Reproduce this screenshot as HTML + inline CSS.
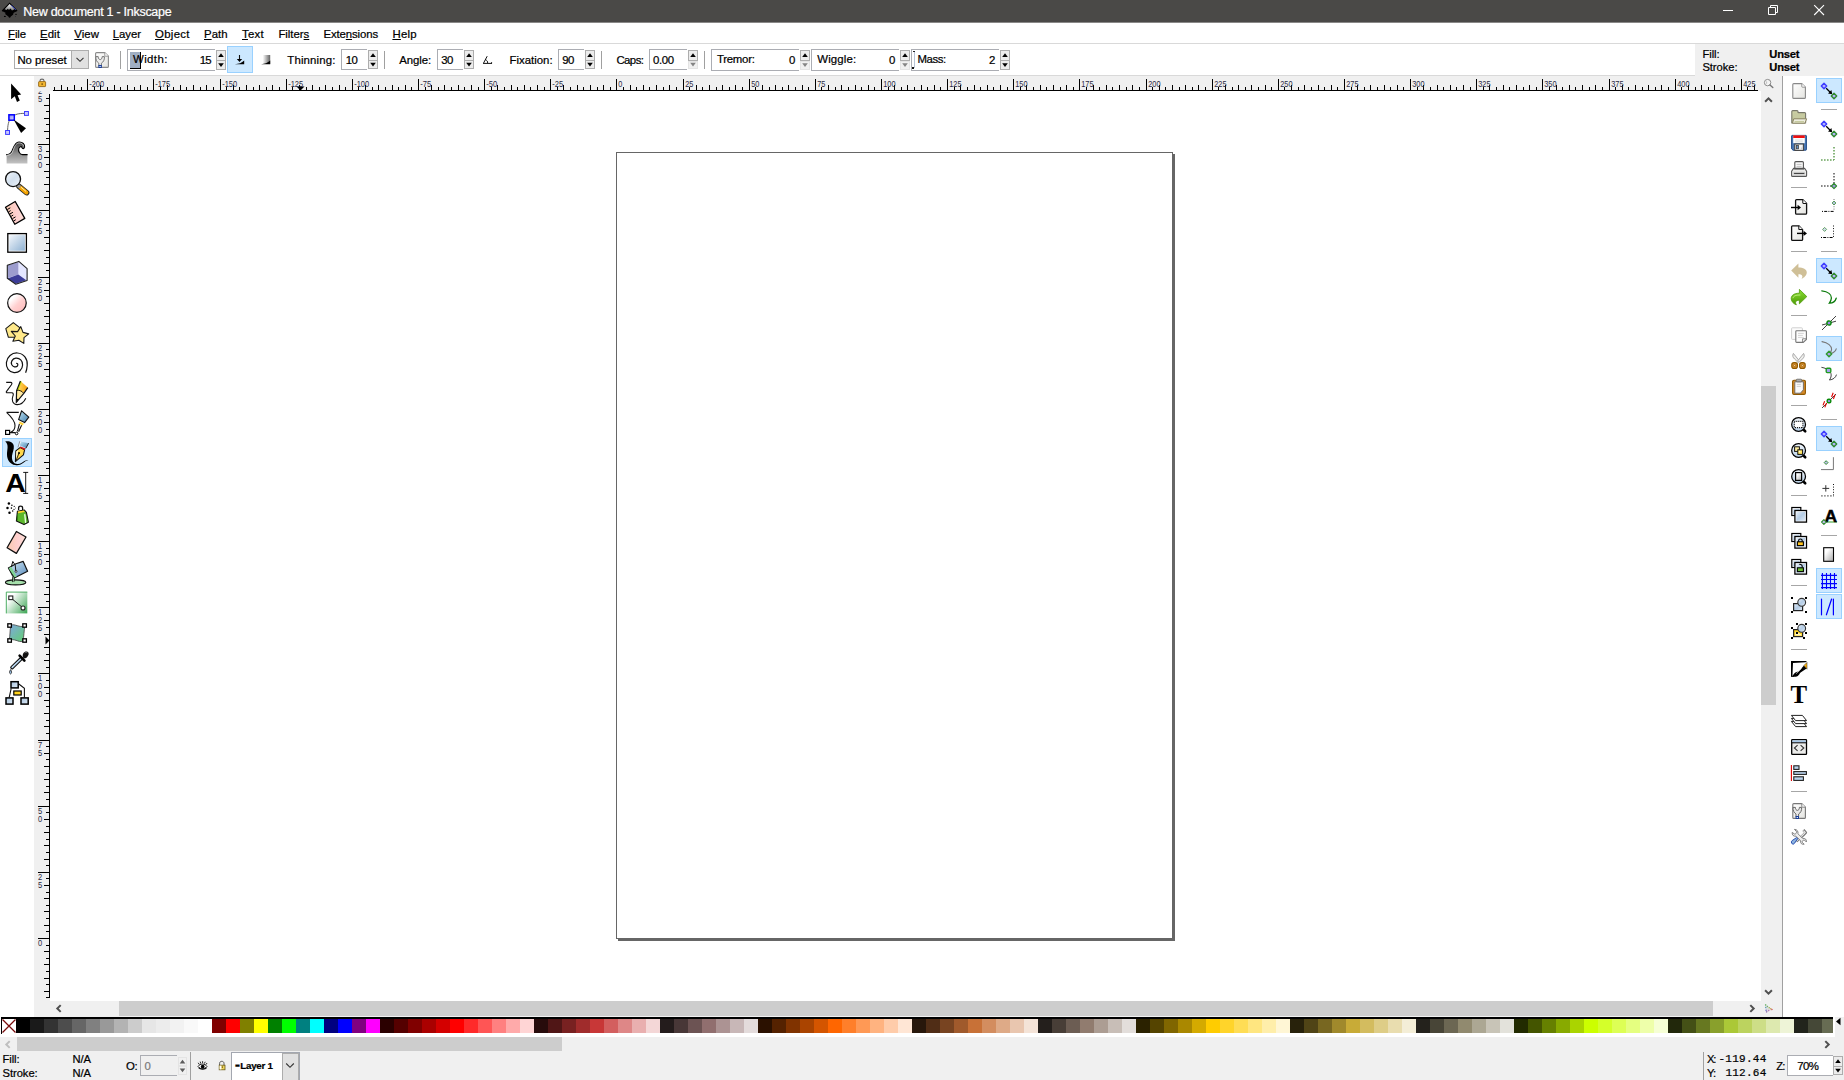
<!DOCTYPE html>
<html lang="en"><head><meta charset="utf-8"><title>New document 1 - Inkscape</title>
<style>
html,body{margin:0;padding:0;overflow:hidden;}
html{width:1844px;height:1080px;}
body{width:1844px;height:1080px;overflow:hidden;background:#fff;position:relative;font:12px "Liberation Sans",sans-serif;}
body>div,body>span,body>svg{position:absolute;box-sizing:border-box;}
body>div>div,body>div>span,body>div>svg{position:absolute;box-sizing:border-box;}
body>span{-webkit-text-stroke:0.22px currentColor;}
svg{overflow:visible;display:block;}
svg text{font-family:"Liberation Sans",sans-serif;}
</style></head>
<body>
<div style="left:0px;top:0px;width:1844px;height:22px;background:#4a4947;"></div>
<div style="left:0px;top:22px;width:1844px;height:1px;background:#8a8988;"></div>
<span id="t0" style="left:23.3px;top:4.99px;font:400 12.5px 'Liberation Sans',sans-serif;color:#fff;white-space:pre;line-height:normal;letter-spacing:-0.274px;">New document 1 - Inkscape</span>
<div style="left:0px;top:23px;width:1844px;height:20px;background:#fff;"></div>
<div style="left:0px;top:43px;width:1844px;height:1px;background:#d9d9d9;"></div>
<span id="t1" style="left:8.1px;top:27.98px;font:400 11.4px 'Liberation Sans',sans-serif;color:#000;white-space:pre;line-height:normal;letter-spacing:-0.119px;"><u>F</u>ile</span>
<span id="t2" style="left:40.1px;top:27.98px;font:400 11.4px 'Liberation Sans',sans-serif;color:#000;white-space:pre;line-height:normal;letter-spacing:0.040px;"><u>E</u>dit</span>
<span id="t3" style="left:74.3px;top:27.98px;font:400 11.4px 'Liberation Sans',sans-serif;color:#000;white-space:pre;line-height:normal;letter-spacing:0.025px;"><u>V</u>iew</span>
<span id="t4" style="left:112.8px;top:27.98px;font:400 11.4px 'Liberation Sans',sans-serif;color:#000;white-space:pre;line-height:normal;letter-spacing:-0.063px;"><u>L</u>ayer</span>
<span id="t5" style="left:155px;top:27.98px;font:400 11.4px 'Liberation Sans',sans-serif;color:#000;white-space:pre;line-height:normal;letter-spacing:0.310px;"><u>O</u>bject</span>
<span id="t6" style="left:204px;top:27.98px;font:400 11.4px 'Liberation Sans',sans-serif;color:#000;white-space:pre;line-height:normal;letter-spacing:0.037px;"><u>P</u>ath</span>
<span id="t7" style="left:242px;top:27.98px;font:400 11.4px 'Liberation Sans',sans-serif;color:#000;white-space:pre;line-height:normal;letter-spacing:0.273px;"><u>T</u>ext</span>
<span id="t8" style="left:278.4px;top:27.98px;font:400 11.4px 'Liberation Sans',sans-serif;color:#000;white-space:pre;line-height:normal;letter-spacing:-0.017px;">Filter<u>s</u></span>
<span id="t9" style="left:323.5px;top:27.98px;font:400 11.4px 'Liberation Sans',sans-serif;color:#000;white-space:pre;line-height:normal;letter-spacing:-0.123px;">Exte<u>n</u>sions</span>
<span id="t10" style="left:392.4px;top:27.98px;font:400 11.4px 'Liberation Sans',sans-serif;color:#000;white-space:pre;line-height:normal;letter-spacing:0.291px;"><u>H</u>elp</span>
<div style="left:0px;top:44px;width:1844px;height:31px;background:#fff;"></div>
<div style="left:0px;top:75px;width:1844px;height:1px;background:#d9d9d9;"></div>
<div style="left:1695px;top:44px;width:149px;height:32px;background:#f0f0f0;"></div>
<div style="left:0px;top:76px;width:34px;height:941px;background:#fff;"></div>
<div style="left:34px;top:76px;width:1727px;height:15px;background:#f0f0f0;"></div>
<div style="left:34px;top:76px;width:16px;height:925px;background:#f0f0f0;"></div>
<div style="left:50px;top:91px;width:1711px;height:910px;background:#fff;"></div>
<div style="left:1761px;top:76px;width:21px;height:941px;background:#f0f0f0;"></div>
<div style="left:34px;top:1001px;width:1748px;height:16px;background:#f0f0f0;"></div>
<div style="left:1782px;top:76px;width:1px;height:941px;background:#a0a0a0;"></div>
<div style="left:1783px;top:76px;width:61px;height:941px;background:#fff;"></div>
<div style="left:616px;top:152px;width:557px;height:787px;background:#fff;border:1px solid #666;"></div>
<div style="left:1173px;top:154px;width:2px;height:787px;background:#666;"></div>
<div style="left:618px;top:939px;width:557px;height:2px;background:#666;"></div>
<div style="left:0px;top:1017px;width:1844px;height:63px;background:#f0f0f0;"></div>
<svg style="left:0px;top:0px;pointer-events:none;" width="1844" height="1080" viewBox="0 0 1844 1080"><path d="M53 90h1705v1h-1705zM54 87h1v3h-1zM61 85h1v5h-1zM67 87h1v3h-1zM74 85h1v5h-1zM81 87h1v3h-1zM87 79h1v11h-1zM94 87h1v3h-1zM100 85h1v5h-1zM107 87h1v3h-1zM114 85h1v5h-1zM120 87h1v3h-1zM127 85h1v5h-1zM134 87h1v3h-1zM140 85h1v5h-1zM147 87h1v3h-1zM153 79h1v11h-1zM160 87h1v3h-1zM167 85h1v5h-1zM173 87h1v3h-1zM180 85h1v5h-1zM186 87h1v3h-1zM193 85h1v5h-1zM200 87h1v3h-1zM206 85h1v5h-1zM213 87h1v3h-1zM220 79h1v11h-1zM226 87h1v3h-1zM233 85h1v5h-1zM239 87h1v3h-1zM246 85h1v5h-1zM253 87h1v3h-1zM259 85h1v5h-1zM266 87h1v3h-1zM272 85h1v5h-1zM279 87h1v3h-1zM286 79h1v11h-1zM292 87h1v3h-1zM299 85h1v5h-1zM306 87h1v3h-1zM312 85h1v5h-1zM319 87h1v3h-1zM325 85h1v5h-1zM332 87h1v3h-1zM339 85h1v5h-1zM345 87h1v3h-1zM352 79h1v11h-1zM358 87h1v3h-1zM365 85h1v5h-1zM372 87h1v3h-1zM378 85h1v5h-1zM385 87h1v3h-1zM392 85h1v5h-1zM398 87h1v3h-1zM405 85h1v5h-1zM411 87h1v3h-1zM418 79h1v11h-1zM425 87h1v3h-1zM431 85h1v5h-1zM438 87h1v3h-1zM444 85h1v5h-1zM451 87h1v3h-1zM458 85h1v5h-1zM464 87h1v3h-1zM471 85h1v5h-1zM478 87h1v3h-1zM484 79h1v11h-1zM491 87h1v3h-1zM497 85h1v5h-1zM504 87h1v3h-1zM511 85h1v5h-1zM517 87h1v3h-1zM524 85h1v5h-1zM530 87h1v3h-1zM537 85h1v5h-1zM544 87h1v3h-1zM550 79h1v11h-1zM557 87h1v3h-1zM563 85h1v5h-1zM570 87h1v3h-1zM577 85h1v5h-1zM583 87h1v3h-1zM590 85h1v5h-1zM597 87h1v3h-1zM603 85h1v5h-1zM610 87h1v3h-1zM616 79h1v11h-1zM623 87h1v3h-1zM630 85h1v5h-1zM636 87h1v3h-1zM643 85h1v5h-1zM649 87h1v3h-1zM656 85h1v5h-1zM663 87h1v3h-1zM669 85h1v5h-1zM676 87h1v3h-1zM683 79h1v11h-1zM689 87h1v3h-1zM696 85h1v5h-1zM702 87h1v3h-1zM709 85h1v5h-1zM716 87h1v3h-1zM722 85h1v5h-1zM729 87h1v3h-1zM735 85h1v5h-1zM742 87h1v3h-1zM749 79h1v11h-1zM755 87h1v3h-1zM762 85h1v5h-1zM769 87h1v3h-1zM775 85h1v5h-1zM782 87h1v3h-1zM788 85h1v5h-1zM795 87h1v3h-1zM802 85h1v5h-1zM808 87h1v3h-1zM815 79h1v11h-1zM821 87h1v3h-1zM828 85h1v5h-1zM835 87h1v3h-1zM841 85h1v5h-1zM848 87h1v3h-1zM855 85h1v5h-1zM861 87h1v3h-1zM868 85h1v5h-1zM874 87h1v3h-1zM881 79h1v11h-1zM888 87h1v3h-1zM894 85h1v5h-1zM901 87h1v3h-1zM907 85h1v5h-1zM914 87h1v3h-1zM921 85h1v5h-1zM927 87h1v3h-1zM934 85h1v5h-1zM940 87h1v3h-1zM947 79h1v11h-1zM954 87h1v3h-1zM960 85h1v5h-1zM967 87h1v3h-1zM974 85h1v5h-1zM980 87h1v3h-1zM987 85h1v5h-1zM993 87h1v3h-1zM1000 85h1v5h-1zM1007 87h1v3h-1zM1013 79h1v11h-1zM1020 87h1v3h-1zM1026 85h1v5h-1zM1033 87h1v3h-1zM1040 85h1v5h-1zM1046 87h1v3h-1zM1053 85h1v5h-1zM1060 87h1v3h-1zM1066 85h1v5h-1zM1073 87h1v3h-1zM1079 79h1v11h-1zM1086 87h1v3h-1zM1093 85h1v5h-1zM1099 87h1v3h-1zM1106 85h1v5h-1zM1112 87h1v3h-1zM1119 85h1v5h-1zM1126 87h1v3h-1zM1132 85h1v5h-1zM1139 87h1v3h-1zM1146 79h1v11h-1zM1152 87h1v3h-1zM1159 85h1v5h-1zM1165 87h1v3h-1zM1172 85h1v5h-1zM1179 87h1v3h-1zM1185 85h1v5h-1zM1192 87h1v3h-1zM1198 85h1v5h-1zM1205 87h1v3h-1zM1212 79h1v11h-1zM1218 87h1v3h-1zM1225 85h1v5h-1zM1232 87h1v3h-1zM1238 85h1v5h-1zM1245 87h1v3h-1zM1251 85h1v5h-1zM1258 87h1v3h-1zM1265 85h1v5h-1zM1271 87h1v3h-1zM1278 79h1v11h-1zM1284 87h1v3h-1zM1291 85h1v5h-1zM1298 87h1v3h-1zM1304 85h1v5h-1zM1311 87h1v3h-1zM1318 85h1v5h-1zM1324 87h1v3h-1zM1331 85h1v5h-1zM1337 87h1v3h-1zM1344 79h1v11h-1zM1351 87h1v3h-1zM1357 85h1v5h-1zM1364 87h1v3h-1zM1370 85h1v5h-1zM1377 87h1v3h-1zM1384 85h1v5h-1zM1390 87h1v3h-1zM1397 85h1v5h-1zM1403 87h1v3h-1zM1410 79h1v11h-1zM1417 87h1v3h-1zM1423 85h1v5h-1zM1430 87h1v3h-1zM1437 85h1v5h-1zM1443 87h1v3h-1zM1450 85h1v5h-1zM1456 87h1v3h-1zM1463 85h1v5h-1zM1470 87h1v3h-1zM1476 79h1v11h-1zM1483 87h1v3h-1zM1489 85h1v5h-1zM1496 87h1v3h-1zM1503 85h1v5h-1zM1509 87h1v3h-1zM1516 85h1v5h-1zM1523 87h1v3h-1zM1529 85h1v5h-1zM1536 87h1v3h-1zM1542 79h1v11h-1zM1549 87h1v3h-1zM1556 85h1v5h-1zM1562 87h1v3h-1zM1569 85h1v5h-1zM1575 87h1v3h-1zM1582 85h1v5h-1zM1589 87h1v3h-1zM1595 85h1v5h-1zM1602 87h1v3h-1zM1609 79h1v11h-1zM1615 87h1v3h-1zM1622 85h1v5h-1zM1628 87h1v3h-1zM1635 85h1v5h-1zM1642 87h1v3h-1zM1648 85h1v5h-1zM1655 87h1v3h-1zM1661 85h1v5h-1zM1668 87h1v3h-1zM1675 79h1v11h-1zM1681 87h1v3h-1zM1688 85h1v5h-1zM1695 87h1v3h-1zM1701 85h1v5h-1zM1708 87h1v3h-1zM1714 85h1v5h-1zM1721 87h1v3h-1zM1728 85h1v5h-1zM1734 87h1v3h-1zM1741 79h1v11h-1zM1747 87h1v3h-1zM1754 85h1v5h-1zM49 94h1v904h-1zM46 98h3v1h-3zM44 105h5v1h-5zM46 111h3v1h-3zM44 118h5v1h-5zM46 124h3v1h-3zM44 131h5v1h-5zM46 138h3v1h-3zM38 144h11v1h-11zM46 151h3v1h-3zM44 157h5v1h-5zM46 164h3v1h-3zM44 171h5v1h-5zM46 177h3v1h-3zM44 184h5v1h-5zM46 191h3v1h-3zM44 197h5v1h-5zM46 204h3v1h-3zM38 210h11v1h-11zM46 217h3v1h-3zM44 224h5v1h-5zM46 230h3v1h-3zM44 237h5v1h-5zM46 243h3v1h-3zM44 250h5v1h-5zM46 257h3v1h-3zM44 263h5v1h-5zM46 270h3v1h-3zM38 277h11v1h-11zM46 283h3v1h-3zM44 290h5v1h-5zM46 296h3v1h-3zM44 303h5v1h-5zM46 310h3v1h-3zM44 316h5v1h-5zM46 323h3v1h-3zM44 329h5v1h-5zM46 336h3v1h-3zM38 343h11v1h-11zM46 349h3v1h-3zM44 356h5v1h-5zM46 363h3v1h-3zM44 369h5v1h-5zM46 376h3v1h-3zM44 382h5v1h-5zM46 389h3v1h-3zM44 396h5v1h-5zM46 402h3v1h-3zM38 409h11v1h-11zM46 415h3v1h-3zM44 422h5v1h-5zM46 429h3v1h-3zM44 435h5v1h-5zM46 442h3v1h-3zM44 449h5v1h-5zM46 455h3v1h-3zM44 462h5v1h-5zM46 468h3v1h-3zM38 475h11v1h-11zM46 482h3v1h-3zM44 488h5v1h-5zM46 495h3v1h-3zM44 501h5v1h-5zM46 508h3v1h-3zM44 515h5v1h-5zM46 521h3v1h-3zM44 528h5v1h-5zM46 534h3v1h-3zM38 541h11v1h-11zM46 548h3v1h-3zM44 554h5v1h-5zM46 561h3v1h-3zM44 568h5v1h-5zM46 574h3v1h-3zM44 581h5v1h-5zM46 587h3v1h-3zM44 594h5v1h-5zM46 601h3v1h-3zM38 607h11v1h-11zM46 614h3v1h-3zM44 620h5v1h-5zM46 627h3v1h-3zM44 634h5v1h-5zM46 640h3v1h-3zM44 647h5v1h-5zM46 654h3v1h-3zM44 660h5v1h-5zM46 667h3v1h-3zM38 673h11v1h-11zM46 680h3v1h-3zM44 687h5v1h-5zM46 693h3v1h-3zM44 700h5v1h-5zM46 706h3v1h-3zM44 713h5v1h-5zM46 720h3v1h-3zM44 726h5v1h-5zM46 733h3v1h-3zM38 740h11v1h-11zM46 746h3v1h-3zM44 753h5v1h-5zM46 759h3v1h-3zM44 766h5v1h-5zM46 773h3v1h-3zM44 779h5v1h-5zM46 786h3v1h-3zM44 792h5v1h-5zM46 799h3v1h-3zM38 806h11v1h-11zM46 812h3v1h-3zM44 819h5v1h-5zM46 826h3v1h-3zM44 832h5v1h-5zM46 839h3v1h-3zM44 845h5v1h-5zM46 852h3v1h-3zM44 859h5v1h-5zM46 865h3v1h-3zM38 872h11v1h-11zM46 878h3v1h-3zM44 885h5v1h-5zM46 892h3v1h-3zM44 898h5v1h-5zM46 905h3v1h-3zM44 911h5v1h-5zM46 918h3v1h-3zM44 925h5v1h-5zM46 931h3v1h-3zM38 938h11v1h-11zM46 945h3v1h-3zM44 951h5v1h-5zM46 958h3v1h-3zM44 964h5v1h-5zM46 971h3v1h-3zM44 978h5v1h-5zM46 984h3v1h-3zM44 991h5v1h-5zM46 997h3v1h-3z" fill="#000" shape-rendering="crispEdges"/><path d="M296.5 86.5h8l-4 4zM45.5 636.5v8l4 -4z" fill="#000"/><clipPath id="vclip"><rect x="34" y="91.6" width="16" height="909"/></clipPath><g font-size="8.6" fill="#2a2a44"><text x="89.2" y="87" textLength="15.0" lengthAdjust="spacingAndGlyphs">-200</text><text x="155.2" y="87" textLength="15.0" lengthAdjust="spacingAndGlyphs">-175</text><text x="222.2" y="87" textLength="15.0" lengthAdjust="spacingAndGlyphs">-150</text><text x="288.2" y="87" textLength="15.0" lengthAdjust="spacingAndGlyphs">-125</text><text x="354.2" y="87" textLength="15.0" lengthAdjust="spacingAndGlyphs">-100</text><text x="420.2" y="87" textLength="10.9" lengthAdjust="spacingAndGlyphs">-75</text><text x="486.2" y="87" textLength="10.9" lengthAdjust="spacingAndGlyphs">-50</text><text x="552.2" y="87" textLength="10.9" lengthAdjust="spacingAndGlyphs">-25</text><text x="618.2" y="87" textLength="4.1" lengthAdjust="spacingAndGlyphs">0</text><text x="685.2" y="87" textLength="8.2" lengthAdjust="spacingAndGlyphs">25</text><text x="751.2" y="87" textLength="8.2" lengthAdjust="spacingAndGlyphs">50</text><text x="817.2" y="87" textLength="8.2" lengthAdjust="spacingAndGlyphs">75</text><text x="883.2" y="87" textLength="12.3" lengthAdjust="spacingAndGlyphs">100</text><text x="949.2" y="87" textLength="12.3" lengthAdjust="spacingAndGlyphs">125</text><text x="1015.2" y="87" textLength="12.3" lengthAdjust="spacingAndGlyphs">150</text><text x="1081.2" y="87" textLength="12.3" lengthAdjust="spacingAndGlyphs">175</text><text x="1148.2" y="87" textLength="12.3" lengthAdjust="spacingAndGlyphs">200</text><text x="1214.2" y="87" textLength="12.3" lengthAdjust="spacingAndGlyphs">225</text><text x="1280.2" y="87" textLength="12.3" lengthAdjust="spacingAndGlyphs">250</text><text x="1346.2" y="87" textLength="12.3" lengthAdjust="spacingAndGlyphs">275</text><text x="1412.2" y="87" textLength="12.3" lengthAdjust="spacingAndGlyphs">300</text><text x="1478.2" y="87" textLength="12.3" lengthAdjust="spacingAndGlyphs">325</text><text x="1544.2" y="87" textLength="12.3" lengthAdjust="spacingAndGlyphs">350</text><text x="1611.2" y="87" textLength="12.3" lengthAdjust="spacingAndGlyphs">375</text><text x="1677.2" y="87" textLength="12.3" lengthAdjust="spacingAndGlyphs">400</text><text x="1743.2" y="87" textLength="12.3" lengthAdjust="spacingAndGlyphs">425</text></g><g font-size="8.6" fill="#2a2a44" clip-path="url(#vclip)"><text x="38" y="946" textLength="4.2" lengthAdjust="spacingAndGlyphs">0</text><text x="38" y="880" textLength="4.2" lengthAdjust="spacingAndGlyphs">2</text><text x="38" y="888" textLength="4.2" lengthAdjust="spacingAndGlyphs">5</text><text x="38" y="814" textLength="4.2" lengthAdjust="spacingAndGlyphs">5</text><text x="38" y="822" textLength="4.2" lengthAdjust="spacingAndGlyphs">0</text><text x="38" y="748" textLength="4.2" lengthAdjust="spacingAndGlyphs">7</text><text x="38" y="756" textLength="4.2" lengthAdjust="spacingAndGlyphs">5</text><text x="38" y="681" textLength="4.2" lengthAdjust="spacingAndGlyphs">1</text><text x="38" y="689" textLength="4.2" lengthAdjust="spacingAndGlyphs">0</text><text x="38" y="697" textLength="4.2" lengthAdjust="spacingAndGlyphs">0</text><text x="38" y="615" textLength="4.2" lengthAdjust="spacingAndGlyphs">1</text><text x="38" y="623" textLength="4.2" lengthAdjust="spacingAndGlyphs">2</text><text x="38" y="631" textLength="4.2" lengthAdjust="spacingAndGlyphs">5</text><text x="38" y="549" textLength="4.2" lengthAdjust="spacingAndGlyphs">1</text><text x="38" y="557" textLength="4.2" lengthAdjust="spacingAndGlyphs">5</text><text x="38" y="565" textLength="4.2" lengthAdjust="spacingAndGlyphs">0</text><text x="38" y="483" textLength="4.2" lengthAdjust="spacingAndGlyphs">1</text><text x="38" y="491" textLength="4.2" lengthAdjust="spacingAndGlyphs">7</text><text x="38" y="499" textLength="4.2" lengthAdjust="spacingAndGlyphs">5</text><text x="38" y="417" textLength="4.2" lengthAdjust="spacingAndGlyphs">2</text><text x="38" y="425" textLength="4.2" lengthAdjust="spacingAndGlyphs">0</text><text x="38" y="433" textLength="4.2" lengthAdjust="spacingAndGlyphs">0</text><text x="38" y="351" textLength="4.2" lengthAdjust="spacingAndGlyphs">2</text><text x="38" y="359" textLength="4.2" lengthAdjust="spacingAndGlyphs">2</text><text x="38" y="367" textLength="4.2" lengthAdjust="spacingAndGlyphs">5</text><text x="38" y="285" textLength="4.2" lengthAdjust="spacingAndGlyphs">2</text><text x="38" y="293" textLength="4.2" lengthAdjust="spacingAndGlyphs">5</text><text x="38" y="301" textLength="4.2" lengthAdjust="spacingAndGlyphs">0</text><text x="38" y="218" textLength="4.2" lengthAdjust="spacingAndGlyphs">2</text><text x="38" y="226" textLength="4.2" lengthAdjust="spacingAndGlyphs">7</text><text x="38" y="234" textLength="4.2" lengthAdjust="spacingAndGlyphs">5</text><text x="38" y="152" textLength="4.2" lengthAdjust="spacingAndGlyphs">3</text><text x="38" y="160" textLength="4.2" lengthAdjust="spacingAndGlyphs">0</text><text x="38" y="168" textLength="4.2" lengthAdjust="spacingAndGlyphs">0</text><text x="38" y="94" textLength="4.2" lengthAdjust="spacingAndGlyphs">2</text><text x="38" y="102" textLength="4.2" lengthAdjust="spacingAndGlyphs">5</text></g></svg>
<div style="left:0px;top:1017px;width:1835px;height:20px;background:#fff;"></div>
<div style="left:1px;top:1017px;width:1832px;height:2px;background:#000;"></div>
<div style="left:1px;top:1017px;width:1px;height:17px;background:#000;"></div>
<svg style="left:0px;top:0px;pointer-events:none;shape-rendering:crispEdges;" width="1844" height="1080" viewBox="0 0 1844 1080"><rect x="16" y="1019" width="14" height="14" fill="#000000"/><rect x="30" y="1019" width="14" height="14" fill="#1a1a1a"/><rect x="44" y="1019" width="14" height="14" fill="#333333"/><rect x="58" y="1019" width="14" height="14" fill="#4d4d4d"/><rect x="72" y="1019" width="14" height="14" fill="#666666"/><rect x="86" y="1019" width="14" height="14" fill="#808080"/><rect x="100" y="1019" width="14" height="14" fill="#999999"/><rect x="114" y="1019" width="14" height="14" fill="#b3b3b3"/><rect x="128" y="1019" width="14" height="14" fill="#cccccc"/><rect x="142" y="1019" width="14" height="14" fill="#e6e6e6"/><rect x="156" y="1019" width="14" height="14" fill="#ececec"/><rect x="170" y="1019" width="14" height="14" fill="#f2f2f2"/><rect x="184" y="1019" width="14" height="14" fill="#f9f9f9"/><rect x="198" y="1019" width="14" height="14" fill="#ffffff"/><rect x="212" y="1019" width="14" height="14" fill="#800000"/><rect x="226" y="1019" width="14" height="14" fill="#ff0000"/><rect x="240" y="1019" width="14" height="14" fill="#808000"/><rect x="254" y="1019" width="14" height="14" fill="#ffff00"/><rect x="268" y="1019" width="14" height="14" fill="#008000"/><rect x="282" y="1019" width="14" height="14" fill="#00ff00"/><rect x="296" y="1019" width="14" height="14" fill="#008080"/><rect x="310" y="1019" width="14" height="14" fill="#00ffff"/><rect x="324" y="1019" width="14" height="14" fill="#000080"/><rect x="338" y="1019" width="14" height="14" fill="#0000ff"/><rect x="352" y="1019" width="14" height="14" fill="#800080"/><rect x="366" y="1019" width="14" height="14" fill="#ff00ff"/><rect x="380" y="1019" width="14" height="14" fill="#2b0000"/><rect x="394" y="1019" width="14" height="14" fill="#550000"/><rect x="408" y="1019" width="14" height="14" fill="#800000"/><rect x="422" y="1019" width="14" height="14" fill="#aa0000"/><rect x="436" y="1019" width="14" height="14" fill="#d40000"/><rect x="450" y="1019" width="14" height="14" fill="#ff0000"/><rect x="464" y="1019" width="14" height="14" fill="#ff2a2a"/><rect x="478" y="1019" width="14" height="14" fill="#ff5555"/><rect x="492" y="1019" width="14" height="14" fill="#ff8080"/><rect x="506" y="1019" width="14" height="14" fill="#ffaaaa"/><rect x="520" y="1019" width="14" height="14" fill="#ffd5d5"/><rect x="534" y="1019" width="14" height="14" fill="#280b0b"/><rect x="548" y="1019" width="14" height="14" fill="#501616"/><rect x="562" y="1019" width="14" height="14" fill="#782121"/><rect x="576" y="1019" width="14" height="14" fill="#a02c2c"/><rect x="590" y="1019" width="14" height="14" fill="#c83737"/><rect x="604" y="1019" width="14" height="14" fill="#d35f5f"/><rect x="618" y="1019" width="14" height="14" fill="#de8787"/><rect x="632" y="1019" width="14" height="14" fill="#e9afaf"/><rect x="646" y="1019" width="14" height="14" fill="#f4d7d7"/><rect x="660" y="1019" width="14" height="14" fill="#241c1c"/><rect x="674" y="1019" width="14" height="14" fill="#483737"/><rect x="688" y="1019" width="14" height="14" fill="#6c5353"/><rect x="702" y="1019" width="14" height="14" fill="#916f6f"/><rect x="716" y="1019" width="14" height="14" fill="#ac9393"/><rect x="730" y="1019" width="14" height="14" fill="#c8b7b7"/><rect x="744" y="1019" width="14" height="14" fill="#e3dbdb"/><rect x="758" y="1019" width="14" height="14" fill="#2b1100"/><rect x="772" y="1019" width="14" height="14" fill="#552200"/><rect x="786" y="1019" width="14" height="14" fill="#803300"/><rect x="800" y="1019" width="14" height="14" fill="#aa4400"/><rect x="814" y="1019" width="14" height="14" fill="#d45500"/><rect x="828" y="1019" width="14" height="14" fill="#ff6600"/><rect x="842" y="1019" width="14" height="14" fill="#ff7f2a"/><rect x="856" y="1019" width="14" height="14" fill="#ff9955"/><rect x="870" y="1019" width="14" height="14" fill="#ffb380"/><rect x="884" y="1019" width="14" height="14" fill="#ffccaa"/><rect x="898" y="1019" width="14" height="14" fill="#ffe6d5"/><rect x="912" y="1019" width="14" height="14" fill="#28170b"/><rect x="926" y="1019" width="14" height="14" fill="#502d16"/><rect x="940" y="1019" width="14" height="14" fill="#784421"/><rect x="954" y="1019" width="14" height="14" fill="#a05a2c"/><rect x="968" y="1019" width="14" height="14" fill="#c87137"/><rect x="982" y="1019" width="14" height="14" fill="#d38d5f"/><rect x="996" y="1019" width="14" height="14" fill="#deaa87"/><rect x="1010" y="1019" width="14" height="14" fill="#e9c6af"/><rect x="1024" y="1019" width="14" height="14" fill="#f4e3d7"/><rect x="1038" y="1019" width="14" height="14" fill="#241f1c"/><rect x="1052" y="1019" width="14" height="14" fill="#483e37"/><rect x="1066" y="1019" width="14" height="14" fill="#6c5d53"/><rect x="1080" y="1019" width="14" height="14" fill="#917c6f"/><rect x="1094" y="1019" width="14" height="14" fill="#ac9d93"/><rect x="1108" y="1019" width="14" height="14" fill="#c8beb7"/><rect x="1122" y="1019" width="14" height="14" fill="#e3dedb"/><rect x="1136" y="1019" width="14" height="14" fill="#2b2200"/><rect x="1150" y="1019" width="14" height="14" fill="#554400"/><rect x="1164" y="1019" width="14" height="14" fill="#806600"/><rect x="1178" y="1019" width="14" height="14" fill="#aa8800"/><rect x="1192" y="1019" width="14" height="14" fill="#d4aa00"/><rect x="1206" y="1019" width="14" height="14" fill="#ffcc00"/><rect x="1220" y="1019" width="14" height="14" fill="#ffd42a"/><rect x="1234" y="1019" width="14" height="14" fill="#ffdd55"/><rect x="1248" y="1019" width="14" height="14" fill="#ffe680"/><rect x="1262" y="1019" width="14" height="14" fill="#ffeeaa"/><rect x="1276" y="1019" width="14" height="14" fill="#fff6d5"/><rect x="1290" y="1019" width="14" height="14" fill="#28220b"/><rect x="1304" y="1019" width="14" height="14" fill="#504416"/><rect x="1318" y="1019" width="14" height="14" fill="#786721"/><rect x="1332" y="1019" width="14" height="14" fill="#a0892c"/><rect x="1346" y="1019" width="14" height="14" fill="#c8ab37"/><rect x="1360" y="1019" width="14" height="14" fill="#d3bc5f"/><rect x="1374" y="1019" width="14" height="14" fill="#decd87"/><rect x="1388" y="1019" width="14" height="14" fill="#e9ddaf"/><rect x="1402" y="1019" width="14" height="14" fill="#f4eed7"/><rect x="1416" y="1019" width="14" height="14" fill="#24221c"/><rect x="1430" y="1019" width="14" height="14" fill="#484537"/><rect x="1444" y="1019" width="14" height="14" fill="#6c6753"/><rect x="1458" y="1019" width="14" height="14" fill="#918a6f"/><rect x="1472" y="1019" width="14" height="14" fill="#aca793"/><rect x="1486" y="1019" width="14" height="14" fill="#c8c4b7"/><rect x="1500" y="1019" width="14" height="14" fill="#e3e2db"/><rect x="1514" y="1019" width="14" height="14" fill="#222b00"/><rect x="1528" y="1019" width="14" height="14" fill="#445500"/><rect x="1542" y="1019" width="14" height="14" fill="#668000"/><rect x="1556" y="1019" width="14" height="14" fill="#88aa00"/><rect x="1570" y="1019" width="14" height="14" fill="#aad400"/><rect x="1584" y="1019" width="14" height="14" fill="#ccff00"/><rect x="1598" y="1019" width="14" height="14" fill="#d4ff2a"/><rect x="1612" y="1019" width="14" height="14" fill="#ddff55"/><rect x="1626" y="1019" width="14" height="14" fill="#e5ff80"/><rect x="1640" y="1019" width="14" height="14" fill="#eeffaa"/><rect x="1654" y="1019" width="14" height="14" fill="#f6ffd5"/><rect x="1668" y="1019" width="14" height="14" fill="#22280b"/><rect x="1682" y="1019" width="14" height="14" fill="#445016"/><rect x="1696" y="1019" width="14" height="14" fill="#677821"/><rect x="1710" y="1019" width="14" height="14" fill="#89a02c"/><rect x="1724" y="1019" width="14" height="14" fill="#abc837"/><rect x="1738" y="1019" width="14" height="14" fill="#bcd35f"/><rect x="1752" y="1019" width="14" height="14" fill="#cdde87"/><rect x="1766" y="1019" width="14" height="14" fill="#dde9af"/><rect x="1780" y="1019" width="14" height="14" fill="#eef4d7"/><rect x="1794" y="1019" width="14" height="14" fill="#22241c"/><rect x="1808" y="1019" width="14" height="14" fill="#454837"/><rect x="1822" y="1019" width="11" height="14" fill="#676c53"/><path d="M2.5 1019.5L15.5 1032.5M15.5 1019.5L2.5 1032.5" stroke="#7a0c0c" stroke-width="1.3" fill="none" shape-rendering="auto"/></svg>
<div style="left:119px;top:1001px;width:1594px;height:15px;background:#cdcdcd;"></div>
<div style="left:1761px;top:386px;width:15px;height:319px;background:#cdcdcd;"></div>
<div style="left:17px;top:1037px;width:545px;height:14px;background:#cdcdcd;"></div>
<svg style="left:0px;top:0px;pointer-events:none;" width="1844" height="1080" viewBox="0 0 1844 1080"><path d="M60.7 1005.1L57.3 1008.5L60.7 1011.9" stroke="#505050" stroke-width="2" fill="none"/><path d="M1750.3 1005.1L1753.7 1008.5L1750.3 1011.9" stroke="#505050" stroke-width="2" fill="none"/><path d="M1765.1 101.7L1768.5 98.3L1771.9 101.7" stroke="#505050" stroke-width="2" fill="none"/><path d="M1765.1 990.3L1768.5 993.7L1771.9 990.3" stroke="#505050" stroke-width="2" fill="none"/><path d="M9.7 1041.1L6.3 1044.5L9.7 1047.9" stroke="#bfbfbf" stroke-width="2" fill="none"/><path d="M1825.3 1041.1L1828.7 1044.5L1825.3 1047.9" stroke="#505050" stroke-width="2" fill="none"/><path d="M1836 1021.5L1840.5 1017.8V1025.2z" fill="#000"/></svg>
<div style="left:14px;top:50px;width:75px;height:19px;background:#fff;border:1px solid #adadad;"></div>
<div style="left:71px;top:50px;width:18px;height:19px;background:#e1e1e1;border:1px solid #adadad;"></div>
<svg style="left:71px;top:50px;" width="18" height="19" viewBox="0 0 18 19"><path d="M5.5 7.8L9 11.3L12.5 7.8" stroke="#333" stroke-width="1.1" fill="none"/></svg>
<span id="t11" style="left:17.4px;top:53.68px;font:400 11.4px 'Liberation Sans',sans-serif;color:#000;white-space:pre;line-height:normal;letter-spacing:-0.021px;">No preset</span>
<div style="left:120px;top:51px;width:1px;height:18px;background:#a0a0a0;"></div>
<div style="left:127px;top:49px;width:88px;height:22px;background:#fff;border:1px solid #abadb3;border-right:none;"></div>
<div style="left:130px;top:52px;width:11px;height:17px;background:#a0afc3;border-right:1px solid #000;border-bottom:1px solid #000;"></div>
<span id="t12" style="left:133px;top:52.68px;font:400 11.4px 'Liberation Sans',sans-serif;color:#000;white-space:pre;line-height:normal;letter-spacing:0.403px;">Width:</span>
<span id="t13" style="left:199.7px;top:53.68px;font:400 11.4px 'Liberation Sans',sans-serif;color:#000;white-space:pre;line-height:normal;letter-spacing:-0.836px;">15</span>
<div style="left:216px;top:50px;width:10px;height:11px;background:#ececec;border:1px solid #adadad;"></div>
<div style="left:216px;top:60px;width:10px;height:10px;background:#ececec;border:1px solid #adadad;"></div>
<svg style="left:216px;top:50px;" width="10" height="20" viewBox="0 0 10 20"><path d="M2.2 7.1L5 3.3000000000000003L7.8 7.1z" fill="#000"/><path d="M2.2 13.299999999999999L5 17.099999999999998L7.8 13.299999999999999z" fill="#000"/></svg>
<div style="left:227px;top:46px;width:26px;height:27px;background:#cce8ff;border:1px solid #99d1ff;"></div>
<span id="t14" style="left:287.3px;top:53.68px;font:400 11.4px 'Liberation Sans',sans-serif;color:#000;white-space:pre;line-height:normal;letter-spacing:0.149px;">Thinning:</span>
<div style="left:341px;top:49px;width:26px;height:21px;background:#fff;border:1px solid #abadb3;border-right:none;"></div>
<span id="t15" style="left:345.8px;top:53.68px;font:400 11.4px 'Liberation Sans',sans-serif;color:#000;white-space:pre;line-height:normal;letter-spacing:-0.586px;">10</span>
<div style="left:368px;top:50px;width:10px;height:11px;background:#ececec;border:1px solid #adadad;"></div>
<div style="left:368px;top:60px;width:10px;height:9px;background:#ececec;border:1px solid #adadad;"></div>
<svg style="left:368px;top:50px;" width="10" height="19" viewBox="0 0 10 19"><path d="M2.2 7.1L5 3.3000000000000003L7.8 7.1z" fill="#000"/><path d="M2.2 12.799999999999999L5 16.599999999999998L7.8 12.799999999999999z" fill="#000"/></svg>
<div style="left:384px;top:51px;width:1px;height:18px;background:#a0a0a0;"></div>
<span id="t16" style="left:399.3px;top:53.68px;font:400 11.4px 'Liberation Sans',sans-serif;color:#000;white-space:pre;line-height:normal;letter-spacing:-0.069px;">Angle:</span>
<div style="left:437px;top:49px;width:26px;height:21px;background:#fff;border:1px solid #abadb3;border-right:none;"></div>
<span id="t17" style="left:441.3px;top:53.68px;font:400 11.4px 'Liberation Sans',sans-serif;color:#000;white-space:pre;line-height:normal;letter-spacing:-0.736px;">30</span>
<div style="left:464px;top:50px;width:10px;height:11px;background:#ececec;border:1px solid #adadad;"></div>
<div style="left:464px;top:60px;width:10px;height:9px;background:#ececec;border:1px solid #adadad;"></div>
<svg style="left:464px;top:50px;" width="10" height="19" viewBox="0 0 10 19"><path d="M2.2 7.1L5 3.3000000000000003L7.8 7.1z" fill="#000"/><path d="M2.2 12.799999999999999L5 16.599999999999998L7.8 12.799999999999999z" fill="#000"/></svg>
<span id="t18" style="left:509.6px;top:53.68px;font:400 11.4px 'Liberation Sans',sans-serif;color:#000;white-space:pre;line-height:normal;letter-spacing:-0.007px;">Fixation:</span>
<div style="left:558px;top:49px;width:26px;height:21px;background:#fff;border:1px solid #abadb3;border-right:none;"></div>
<span id="t19" style="left:562.2px;top:53.68px;font:400 11.4px 'Liberation Sans',sans-serif;color:#000;white-space:pre;line-height:normal;letter-spacing:-0.586px;">90</span>
<div style="left:585px;top:50px;width:10px;height:11px;background:#ececec;border:1px solid #adadad;"></div>
<div style="left:585px;top:60px;width:10px;height:9px;background:#ececec;border:1px solid #adadad;"></div>
<svg style="left:585px;top:50px;" width="10" height="19" viewBox="0 0 10 19"><path d="M2.2 7.1L5 3.3000000000000003L7.8 7.1z" fill="#000"/><path d="M2.2 12.799999999999999L5 16.599999999999998L7.8 12.799999999999999z" fill="#000"/></svg>
<div style="left:601px;top:51px;width:1px;height:18px;background:#a0a0a0;"></div>
<span id="t20" style="left:616.4px;top:53.68px;font:400 11.4px 'Liberation Sans',sans-serif;color:#000;white-space:pre;line-height:normal;letter-spacing:-0.553px;">Caps:</span>
<div style="left:649px;top:49px;width:38px;height:21px;background:#fff;border:1px solid #abadb3;border-right:none;"></div>
<span id="t21" style="left:653px;top:53.68px;font:400 11.4px 'Liberation Sans',sans-serif;color:#000;white-space:pre;line-height:normal;letter-spacing:-0.343px;">0.00</span>
<div style="left:688px;top:50px;width:10px;height:11px;background:#ececec;border:1px solid #adadad;"></div>
<div style="left:688px;top:61px;width:10px;height:8px;background:#f0f0f0;border:1px solid #e4e4e4;"></div>
<svg style="left:688px;top:50px;" width="10" height="19" viewBox="0 0 10 19"><path d="M2.2 7.1L5 3.3000000000000003L7.8 7.1z" fill="#000"/><path d="M2.2 12.799999999999999L5 16.599999999999998L7.8 12.799999999999999z" fill="#848484"/></svg>
<div style="left:704px;top:51px;width:1px;height:18px;background:#a0a0a0;"></div>
<div style="left:711px;top:49px;width:88px;height:22px;background:#fff;border:1px solid #abadb3;border-right:none;"></div>
<span id="t22" style="left:717px;top:52.68px;font:400 11.4px 'Liberation Sans',sans-serif;color:#000;white-space:pre;line-height:normal;letter-spacing:-0.265px;">Tremor:</span>
<span id="t23" style="left:789px;top:53.68px;font:400 11.4px 'Liberation Sans',sans-serif;color:#000;white-space:pre;line-height:normal;letter-spacing:0.056px;">0</span>
<div style="left:800px;top:50px;width:10px;height:11px;background:#ececec;border:1px solid #adadad;"></div>
<div style="left:800px;top:61px;width:10px;height:9px;background:#f0f0f0;border:1px solid #e4e4e4;"></div>
<svg style="left:800px;top:50px;" width="10" height="20" viewBox="0 0 10 20"><path d="M2.2 7.1L5 3.3000000000000003L7.8 7.1z" fill="#000"/><path d="M2.2 13.299999999999999L5 17.099999999999998L7.8 13.299999999999999z" fill="#848484"/></svg>
<div style="left:811px;top:49px;width:88px;height:22px;background:#fff;border:1px solid #abadb3;border-right:none;"></div>
<span id="t24" style="left:817.3px;top:52.68px;font:400 11.4px 'Liberation Sans',sans-serif;color:#000;white-space:pre;line-height:normal;letter-spacing:0.131px;">Wiggle:</span>
<span id="t25" style="left:889px;top:53.68px;font:400 11.4px 'Liberation Sans',sans-serif;color:#000;white-space:pre;line-height:normal;letter-spacing:0.056px;">0</span>
<div style="left:900px;top:50px;width:10px;height:11px;background:#ececec;border:1px solid #adadad;"></div>
<div style="left:900px;top:61px;width:10px;height:9px;background:#f0f0f0;border:1px solid #e4e4e4;"></div>
<svg style="left:900px;top:50px;" width="10" height="20" viewBox="0 0 10 20"><path d="M2.2 7.1L5 3.3000000000000003L7.8 7.1z" fill="#000"/><path d="M2.2 13.299999999999999L5 17.099999999999998L7.8 13.299999999999999z" fill="#848484"/></svg>
<div style="left:911px;top:49px;width:88px;height:22px;background:#fff;border:1px solid #abadb3;border-right:none;"></div>
<span id="t26" style="left:917.5px;top:52.68px;font:400 11.4px 'Liberation Sans',sans-serif;color:#000;white-space:pre;line-height:normal;letter-spacing:-0.418px;">Mass:</span>
<span id="t27" style="left:989px;top:53.68px;font:400 11.4px 'Liberation Sans',sans-serif;color:#000;white-space:pre;line-height:normal;letter-spacing:0.056px;">2</span>
<div style="left:1000px;top:50px;width:10px;height:11px;background:#ececec;border:1px solid #adadad;"></div>
<div style="left:1000px;top:60px;width:10px;height:10px;background:#ececec;border:1px solid #adadad;"></div>
<svg style="left:1000px;top:50px;" width="10" height="20" viewBox="0 0 10 20"><path d="M2.2 7.1L5 3.3000000000000003L7.8 7.1z" fill="#000"/><path d="M2.2 13.299999999999999L5 17.099999999999998L7.8 13.299999999999999z" fill="#000"/></svg>
<div style="left:914px;top:52px;width:1px;height:16px;background:#b9c4d6;"></div>
<div style="left:913px;top:51px;width:2px;height:1px;background:#222;"></div>
<div style="left:912px;top:67px;width:2px;height:2px;background:#111;"></div>
<span id="t28" style="left:1702.4px;top:47.56px;font:400 11.2px 'Liberation Sans',sans-serif;color:#000;white-space:pre;line-height:normal;letter-spacing:-0.041px;">Fill:</span>
<span id="t29" style="left:1702.4px;top:61.06px;font:400 11.2px 'Liberation Sans',sans-serif;color:#000;white-space:pre;line-height:normal;letter-spacing:-0.050px;">Stroke:</span>
<span id="t30" style="left:1769.3px;top:47.56px;font:700 11.2px 'Liberation Sans',sans-serif;color:#000;white-space:pre;line-height:normal;letter-spacing:-0.199px;">Unset</span>
<span id="t31" style="left:1769.3px;top:61.06px;font:700 11.2px 'Liberation Sans',sans-serif;color:#000;white-space:pre;line-height:normal;letter-spacing:-0.199px;">Unset</span>
<span id="t32" style="left:2.6px;top:1053.06px;font:400 11.2px 'Liberation Sans',sans-serif;color:#000;white-space:pre;line-height:normal;letter-spacing:-0.101px;">Fill:</span>
<span id="t33" style="left:2.6px;top:1067.06px;font:400 11.2px 'Liberation Sans',sans-serif;color:#000;white-space:pre;line-height:normal;letter-spacing:-0.065px;">Stroke:</span>
<span id="t34" style="left:72.5px;top:1053.06px;font:400 11.2px 'Liberation Sans',sans-serif;color:#000;white-space:pre;line-height:normal;letter-spacing:-0.052px;">N/A</span>
<span id="t35" style="left:72.5px;top:1067.06px;font:400 11.2px 'Liberation Sans',sans-serif;color:#000;white-space:pre;line-height:normal;letter-spacing:-0.052px;">N/A</span>
<span id="t36" style="left:126px;top:1060.28px;font:400 11.4px 'Liberation Sans',sans-serif;color:#000;white-space:pre;line-height:normal;letter-spacing:-0.366px;">O:</span>
<div style="left:140px;top:1055px;width:37px;height:21px;background:#f0f0f0;border:1px solid #abadb3;border-right:none;"></div>
<span id="t37" style="left:144.5px;top:1060.28px;font:400 11.4px 'Liberation Sans',sans-serif;color:#7a7a7a;white-space:pre;line-height:normal;">0</span>
<div style="left:178px;top:1057px;width:9px;height:9px;background:#f0f0f0;border:1px solid #e4e4e4;"></div>
<div style="left:178px;top:1066px;width:9px;height:9px;background:#f0f0f0;border:1px solid #e4e4e4;"></div>
<svg style="left:178px;top:1057px;" width="9" height="18" viewBox="0 0 9 18"><path d="M1.7000000000000002 6.5L4.5 2.6999999999999997L7.3 6.5z" fill="#5c5c5c"/><path d="M1.7000000000000002 11.5L4.5 15.3L7.3 11.5z" fill="#5c5c5c"/></svg>
<div style="left:190px;top:1052px;width:1px;height:28px;background:#a0a0a0;"></div>
<div style="left:231px;top:1052px;width:69px;height:28px;background:#fff;border:1px solid #a3a7b0;border-bottom:none;"></div>
<div style="left:282px;top:1053px;width:17px;height:27px;background:#e1e1e1;border:1px solid #adadad;border-bottom:none;"></div>
<svg style="left:282px;top:1054px;" width="16" height="26" viewBox="0 0 16 26"><path d="M4.2 9.5L8 13.3L11.8 9.5" stroke="#333" stroke-width="1.1" fill="none"/></svg>
<span id="t38" style="left:235px;top:1062.49px;font:400 5.2px 'DejaVu Sans',sans-serif;color:#000;white-space:pre;line-height:normal;">▬</span>
<span id="t39" style="left:240.3px;top:1060.33px;font:700 9.8px 'Liberation Sans',sans-serif;color:#000;white-space:pre;line-height:normal;letter-spacing:-0.290px;">Layer 1</span>
<div style="left:1703px;top:1052px;width:1px;height:28px;background:#a0a0a0;"></div>
<span id="t40" style="left:1707px;top:1053.06px;font:400 11.2px 'Liberation Sans',sans-serif;color:#000;white-space:pre;line-height:normal;letter-spacing:-1.089px;">X:</span>
<span id="t41" style="left:1707px;top:1067.06px;font:400 11.2px 'Liberation Sans',sans-serif;color:#000;white-space:pre;line-height:normal;letter-spacing:-0.777px;">Y:</span>
<span id="t42" style="left:1718.4px;top:1053.24px;font:400 11px 'Liberation Mono',monospace;color:#000;white-space:pre;line-height:normal;letter-spacing:0.283px;">-119.44</span>
<span id="t43" style="left:1725.4px;top:1067.24px;font:400 11px 'Liberation Mono',monospace;color:#000;white-space:pre;line-height:normal;letter-spacing:0.265px;">112.64</span>
<span id="t44" style="left:1776.2px;top:1060.06px;font:400 11.2px 'Liberation Sans',sans-serif;color:#000;white-space:pre;line-height:normal;letter-spacing:-0.827px;">Z:</span>
<div style="left:1787px;top:1055px;width:46px;height:21px;background:#fff;border:1px solid #abadb3;border-right:none;"></div>
<span id="t45" style="left:1797.3px;top:1060.28px;font:400 11.4px 'Liberation Sans',sans-serif;color:#000;white-space:pre;line-height:normal;letter-spacing:-0.637px;">70%</span>
<div style="left:1833px;top:1056px;width:10px;height:11px;background:#ececec;border:1px solid #adadad;"></div>
<div style="left:1833px;top:1066px;width:10px;height:9px;background:#ececec;border:1px solid #adadad;"></div>
<svg style="left:1833px;top:1056px;" width="10" height="19" viewBox="0 0 10 19"><path d="M2.2 7.1L5 3.3000000000000003L7.8 7.1z" fill="#000"/><path d="M2.2 12.799999999999999L5 16.599999999999998L7.8 12.799999999999999z" fill="#000"/></svg>
<div style="left:2px;top:438px;width:30px;height:29px;background:#cce8ff;border:1px solid #99d1ff;"></div>
<svg style="left:0px;top:0px;pointer-events:none;" width="40" height="1080" viewBox="0 0 40 1080"><defs>
<linearGradient id="gBlue" x1="0" y1="0" x2="1" y2="1"><stop offset="0" stop-color="#f2f6fb"/><stop offset="1" stop-color="#8fb2d3"/></linearGradient>
<linearGradient id="gPink" x1="0" y1="0" x2="1" y2="1"><stop offset="0.25" stop-color="#fff"/><stop offset="0.55" stop-color="#ffd0d0"/><stop offset="1" stop-color="#ffb8b8"/></linearGradient>
<linearGradient id="gTweak" x1="0" y1="0" x2="0" y2="1"><stop offset="0" stop-color="#3c3c3c"/><stop offset="0.5" stop-color="#8a8a8a"/><stop offset="1" stop-color="#c4c4c4"/></linearGradient>
<linearGradient id="gLens" x1="0" y1="0" x2="1" y2="1"><stop offset="0" stop-color="#f4f8fc"/><stop offset="0.5" stop-color="#d3e0ee"/><stop offset="1" stop-color="#eef3f9"/></linearGradient>
<linearGradient id="gPeach" x1="0" y1="0" x2="1" y2="0"><stop offset="0" stop-color="#f9c9b0"/><stop offset="0.6" stop-color="#ffd0d0"/><stop offset="1" stop-color="#fbe0d6"/></linearGradient>
<linearGradient id="gGreenSq" x1="0.15" y1="0.35" x2="1" y2="1"><stop offset="0" stop-color="#ffffff"/><stop offset="1" stop-color="#3aa552"/></linearGradient>
<linearGradient id="gMesh" x1="0" y1="0" x2="1" y2="1"><stop offset="0" stop-color="#7fa8e0"/><stop offset="1" stop-color="#62cf70"/></linearGradient>
<linearGradient id="gBucket" x1="0" y1="0" x2="1" y2="1"><stop offset="0" stop-color="#d8ecf6"/><stop offset="1" stop-color="#5588bb"/></linearGradient>
<linearGradient id="gOrange" x1="0" y1="0" x2="1" y2="0"><stop offset="0" stop-color="#ffe36b"/><stop offset="1" stop-color="#f59a0a"/></linearGradient>
<linearGradient id="gPenBlue" x1="0" y1="0" x2="1" y2="1"><stop offset="0" stop-color="#c2e4f2"/><stop offset="1" stop-color="#3f7fb0"/></linearGradient>
<linearGradient id="gNode" x1="0" y1="0" x2="1" y2="1"><stop offset="0" stop-color="#8a8aee"/><stop offset="1" stop-color="#d8d8ff"/></linearGradient>
<linearGradient id="gConn" x1="0" y1="0" x2="1" y2="1"><stop offset="0" stop-color="#a9c4df"/><stop offset="1" stop-color="#dbe7f3"/></linearGradient>
</defs><path d="M11.1 83.6V99.2L14.8 96.2L17 101.9L19.8 100.5L17.6 95.2L21.2 94.4z" fill="#000"/><path d="M7.6 130C7.8 123 9.5 119 11.5 117.5C15 114 19 113.4 24 113.4" stroke="#555" stroke-width="0.9" fill="none"/><rect x="8.9" y="114.8" width="5.4" height="5.4" fill="url(#gNode)" stroke="#0000ff" stroke-width="1.5"/><rect x="24.5" y="111.5" width="3.9" height="3.9" fill="#c8c8ff" stroke="#3c3cff" stroke-width="1"/><rect x="5.6" y="130.5" width="3.9" height="3.9" fill="#c8c8ff" stroke="#3c3cff" stroke-width="1"/><path d="M13.6 119.6L26 128.2L21.1 133z" fill="#000"/><path d="M6.6 154.6C9.5 154.6 11 153.6 12.2 150.6C13.6 147 15 142.2 19 142C22.6 141.8 25 144.4 24.6 147.2C24.2 149 22.4 149 22 147.6C21.4 146 19.5 146.6 18.8 148.4C18 151 19.6 154.6 22.6 154.6H27.4V163.6H6.6z" fill="url(#gTweak)"/><path d="M6.2 154.6C9.5 154.6 11 153.6 12.2 150.6C13.6 147 15 142.2 19 142C22.6 141.8 25 144.4 24.6 147.2C24.2 149 22.4 149 22 147.6C21.4 146 19.5 146.6 18.8 148.4C18 151 19.6 154.6 22.6 154.6H27.6" stroke="#000" stroke-width="1.1" fill="none"/><path d="M7 155.2C10 155.2 11.8 154 12.9 150.9C14.2 147.4 15.6 143.1 19 142.9C21.8 142.8 23.7 144.6 23.6 146.4" stroke="#fff" stroke-width="0.7" fill="none" opacity="0.85"/><path d="M19 186.3L26.6 192.6" stroke="#2a2a2a" stroke-width="5.6" stroke-linecap="round"/><path d="M20.4 187.5L26.4 192.5" stroke="#f5a400" stroke-width="4" stroke-linecap="round"/><path d="M21.2 187.4L25.8 191.2" stroke="#ffe9a8" stroke-width="1" stroke-linecap="round"/><path d="M17.6 185.2L20.2 187.4" stroke="#9a9a9a" stroke-width="3.2"/><circle cx="13.05" cy="179.1" r="7.5" fill="url(#gLens)" stroke="#111" stroke-width="1.3"/><path d="M5.5 207.2L15.2 201.5L24.8 218.4L14.8 224.2z" fill="url(#gPeach)" stroke="#000" stroke-width="1.3" stroke-linejoin="round"/><path d="M7.3 209.5L10.3 207.8M8.6 211.8L10.6 210.6M9.9 214L12.9 212.3M11.2 216.3L13.2 215.1M12.5 218.6L15.5 216.9M13.8 220.9L15.8 219.7" stroke="#000" stroke-width="1"/><rect x="7.8" y="233.6" width="18.6" height="18.6" fill="#fff" stroke="#000" stroke-width="1.3"/><rect x="9.3" y="235.1" width="15.6" height="15.6" fill="url(#gBlue)"/><path d="M18.8 261.4L7.3 265.3V278.3L15.8 284.3L27.1 280.5V268.7z" fill="#e4e6ff"/><path d="M7.3 265.3L18.3 262.2V274.6L7.3 278.3z" fill="#9c9cce"/><path d="M18.3 274.6L7.6 278.5L15.8 283.8L26.3 280.2z" fill="#3c3c98"/><path d="M18.8 261.4L7.3 265.3V278.3L15.8 284.3L27.1 280.5V268.7z" fill="none" stroke="#222" stroke-width="1.1" stroke-linejoin="round"/><circle cx="16.95" cy="303" r="9.3" fill="url(#gPink)" stroke="#111" stroke-width="1.2"/><path d="M13.3 322.6L5.8 328.6L8.4 337.3H18.3L21 328.6z" fill="#ffe98a" stroke="#1a1a1a" stroke-width="1.1" stroke-linejoin="round"/><path d="M20.8 326.6L23 332.4L28.7 333.9L24 337.6L23.8 343.4L18.8 340.2L12.9 341.3L15.3 336L11.3 331.4L17.6 331.6z" fill="#ffe98a" stroke="#1a1a1a" stroke-width="1.1" stroke-linejoin="round"/><path d="M16.2 363.6C17.6 362.8 18.4 364.8 17.4 366C16 367.6 13 367 11.8 364.8C10.4 362 12.4 358.6 15.8 358.2C19.8 357.8 22.8 361 22.6 365C22.4 369.8 18.6 373 14 372.6C9 372.2 5.8 367.8 6.4 362.6C7 356.8 11.8 352.6 17.4 353C23.8 353.4 27.8 359 27.2 365.4C27 368.2 26.6 370.6 25.6 372.8" stroke="#111" stroke-width="1.2" fill="none"/><path d="M6.2 382.4H10.6C12.2 382.4 12.2 383.6 11.4 384.8L6.4 391.6C6 392.4 6.4 392.8 7.2 392.8H11.6C13.6 392.8 13.6 394.4 12.8 396.4C11.4 400 12.6 404.6 17.2 404.6C21 404.6 24 402 25.8 398.2" stroke="#111" stroke-width="1.1" fill="none"/><path d="M20.4 381L27.8 387.6L23.4 393L17 390.4z" fill="url(#gOrange)"/><path d="M20.4 381L21.6 381.6L18.2 390.8L17 390.4z" fill="#b8e000"/><path d="M17 390.4L23.4 393L16.4 402.2z" fill="#ffe9a0"/><path d="M16.2 398.4L18.8 399.2L16.3 402.4z" fill="#000"/><path d="M20.4 381L16.6 390.6L16.3 402.4L24 393.2L27.8 387.6" stroke="#111" stroke-width="1.2" fill="none" stroke-linejoin="round"/><path d="M17 390.4C19 389.8 22 391 23.4 393" stroke="#111" stroke-width="0.9" fill="none"/><path d="M6.6 412.4H18.8M6.6 412.4C11.5 417 15 421.5 15 425.5C15 429 13 431.4 10.6 432.2M9.8 432.6H15.4" stroke="#111" stroke-width="1.1" fill="none"/><rect x="5.6" y="430.4" width="4" height="4" fill="#fff" stroke="#000" stroke-width="1.2"/><circle cx="16.6" cy="433.5" r="1.3" fill="#fff" stroke="#000" stroke-width="1"/><path d="M21.6 410.8L28.8 417.2L24.6 422.6L18.6 419.6z" fill="url(#gPenBlue)" stroke="#111" stroke-width="1.1" stroke-linejoin="round"/><path d="M19.6 421.4L23.8 423.6L22.8 425.6L19 423.6z" fill="#ffd23a"/><path d="M19.4 424L17.4 431.4M21.6 425.2L18.6 431.8" stroke="#111" stroke-width="1.1" fill="none"/><path d="M5.2 441.4C9.6 440.6 13.4 442.4 13.8 446C14.2 449.4 12.4 452.4 12 456C11.6 460 13.2 463.2 16.2 463.8C20 464.6 22 462.6 24.4 461C25.8 460.2 27.2 460 28.4 460.6C26.6 460.4 25.4 461.2 23.8 462.6C21.4 464.6 18.6 465.6 15.2 465C10 464.2 7 459.6 7 454.4C7 449.6 9.2 444.6 5.2 441.4z" fill="#000"/><path d="M15.4 461.6L15.8 451L20 447.6L24.6 449.8L23.4 454.8z" fill="#ffd84a" stroke="#111" stroke-width="1.1" stroke-linejoin="round"/><path d="M16 460.6L16.3 451.6L18.6 449.6z" fill="#fff6d8"/><circle cx="19" cy="453" r="1" fill="#000"/><path d="M19 453L16 460.8" stroke="#000" stroke-width="0.8"/><path d="M20.4 446.4L25.6 448.6L24.8 450L19.8 447.6z" fill="#d91414"/><path d="M20.6 441.6L28.8 443.2L26 448L20 445.6z" fill="url(#gPenBlue)"/><path d="M20.4 441.4L18.6 447.2" stroke="#fff" stroke-width="1"/><path d="M19.8 441.2L18 447.4" stroke="#555" stroke-width="0.6"/><path d="M28.6 443.2L25.8 448.4" stroke="#222" stroke-width="1"/><text x="5.2" y="492" font-size="26.5" font-weight="700" fill="#000" textLength="20.6" lengthAdjust="spacingAndGlyphs">A</text><path d="M25.7 472.4V493.4M23.2 472.4H28.2M23.2 493.4H28.2" stroke="#000" stroke-width="0.9" fill="none"/><circle cx="8.9" cy="503.6" r="1.25" fill="#000"/><circle cx="7.5" cy="508" r="1.25" fill="#000"/><circle cx="9.5" cy="512.8" r="1.25" fill="#000"/><circle cx="11.9" cy="505.2" r="0.8" fill="#000"/><circle cx="11.4" cy="508.1" r="0.8" fill="#000"/><circle cx="12.7" cy="511" r="0.75" fill="#000"/><circle cx="14.2" cy="506.4" r="0.55" fill="#000"/><circle cx="14" cy="509.4" r="0.55" fill="#000"/><circle cx="15.6" cy="508" r="0.45" fill="#000"/><path d="M18.6 510V508C18.6 505.6 22.6 505.6 22.6 508V510" stroke="#111" stroke-width="1.3" fill="#fff"/><path d="M17.4 511.2L24.4 510L26.4 512.4L28.4 522.2L24 524.6L16.4 521z" fill="#5cb82c" stroke="#111" stroke-width="1.1" stroke-linejoin="round"/><path d="M17.8 511.4L24 510.4L24.6 512L18 513.2z" fill="#ffd42a"/><path d="M24.8 514.6L25.6 522.4" stroke="#e8ffe0" stroke-width="1.4" stroke-linecap="round"/><path d="M17.6 514L17.2 520.6" stroke="#2f7a10" stroke-width="1"/><path d="M16.4 531.5L26 537L16.4 553.4L7.1 547.7z" fill="url(#gPeach)" stroke="#111" stroke-width="1.3" stroke-linejoin="round"/><ellipse cx="15.6" cy="582.4" rx="10.2" ry="2.5" fill="#a6e0ac" stroke="#111" stroke-width="1.1"/><path d="M8.6 568.2L14.6 571.2L14.2 581.6H12.4L12.8 576.6z" fill="#a6e0ac" stroke="#111" stroke-width="0.9" stroke-linejoin="round"/><path d="M13 581.4h1.6v1.6h-1.6z" fill="#a6e0ac"/><path d="M8.4 568L16 563.8L23.2 561.4L27.6 571.2L14.8 577.8z" fill="url(#gBucket)" stroke="#111" stroke-width="1.2" stroke-linejoin="round"/><path d="M8.6 568.2L11.2 566.8L16.6 576.6L14.8 577.6z" fill="#7fd492"/><path d="M11.4 566.6L12.8 561.4L15.2 565L15.8 571" stroke="#111" stroke-width="1" fill="none"/><circle cx="16" cy="571.4" r="1" fill="#ddd" stroke="#111" stroke-width="0.7"/><rect x="6.3" y="592.1" width="21" height="21.3" fill="url(#gGreenSq)"/><path d="M6.3 613.4V592.1H27.3" stroke="#3aa552" stroke-width="0.9" fill="none"/><path d="M11 598L22.6 607.6" stroke="#222" stroke-width="1"/><rect x="8.8" y="596" width="4" height="3.6" fill="#fff" stroke="#222" stroke-width="1.1"/><circle cx="23" cy="608" r="2" fill="#fff" stroke="#222" stroke-width="1.1"/><path d="M11 625.2C15 623.4 19 628 25 626C23.6 631 24.4 636 22.6 641.4C18.6 642.6 13.6 637.6 9 640.6C10.4 635.6 9.6 630.6 11 625.2z" fill="url(#gMesh)" stroke="#555" stroke-width="0.9"/><rect x="7.8" y="623.8" width="3.6" height="3.4" fill="#fff" stroke="#000" stroke-width="1.3"/><rect x="22.8" y="623.8" width="3.6" height="3.4" fill="#fff" stroke="#000" stroke-width="1.3"/><rect x="7.8" y="638.8" width="3.6" height="3.4" fill="#fff" stroke="#000" stroke-width="1.3"/><rect x="22.8" y="638.8" width="3.6" height="3.4" fill="#fff" stroke="#000" stroke-width="1.3"/><path d="M21.4 658.4L12 667.6" stroke="#111" stroke-width="3.6" stroke-linecap="round"/><path d="M20.6 659.2L12.2 667.4" stroke="#bcd9f2" stroke-width="1.6" stroke-linecap="round"/><path d="M19.6 655.6L24.4 660.6" stroke="#000" stroke-width="2.6" stroke-linecap="round"/><path d="M23 657.4C22 654 24 651.4 26.6 651.6C29 651.8 29.4 654.6 27.4 656.8C25.8 658.6 24.2 659 23 657.4z" fill="#111"/><path d="M24.6 652.8C25.6 652.2 26.8 652.2 27.4 652.8" stroke="#888" stroke-width="0.8" fill="none"/><path d="M10.6 669.6C11.8 671.4 12 673.4 10.6 674C9.2 673.6 9.2 671.4 10.6 669.6z" fill="#9cc4ea" stroke="#222" stroke-width="0.8"/><path d="M11.2 688.4L9.2 697.4M18.8 684L24.4 688.2V697.4" stroke="#111" stroke-width="1.1" fill="none"/><rect x="11" y="681.7" width="7.2" height="6.2" fill="url(#gConn)" stroke="#000" stroke-width="1.5"/><rect x="6" y="697.9" width="7" height="6.2" fill="url(#gConn)" stroke="#000" stroke-width="1.5"/><rect x="21" y="697.9" width="7.2" height="6.2" fill="url(#gConn)" stroke="#000" stroke-width="1.5"/><rect x="13.8" y="691" width="7.4" height="4" fill="#ffd21e" stroke="#000" stroke-width="1.2"/></svg>
<div style="left:1791px;top:187px;width:16px;height:1px;background:#a6a6a6;"></div>
<div style="left:1791px;top:251px;width:16px;height:1px;background:#a6a6a6;"></div>
<div style="left:1791px;top:315px;width:16px;height:1px;background:#a6a6a6;"></div>
<div style="left:1791px;top:405px;width:16px;height:1px;background:#a6a6a6;"></div>
<div style="left:1791px;top:495px;width:16px;height:1px;background:#a6a6a6;"></div>
<div style="left:1791px;top:585px;width:16px;height:1px;background:#a6a6a6;"></div>
<div style="left:1791px;top:649px;width:16px;height:1px;background:#a6a6a6;"></div>
<div style="left:1791px;top:791px;width:16px;height:1px;background:#a6a6a6;"></div>
<div style="left:1821px;top:109px;width:16px;height:1px;background:#a6a6a6;"></div>
<div style="left:1821px;top:251px;width:16px;height:1px;background:#a6a6a6;"></div>
<div style="left:1821px;top:419px;width:16px;height:1px;background:#a6a6a6;"></div>
<div style="left:1821px;top:535px;width:16px;height:1px;background:#a6a6a6;"></div>
<div style="left:1816px;top:78px;width:26px;height:25px;background:#cce8ff;border:1px solid #99d1ff;"></div>
<div style="left:1816px;top:258px;width:26px;height:25px;background:#cce8ff;border:1px solid #99d1ff;"></div>
<div style="left:1816px;top:336px;width:26px;height:25px;background:#cce8ff;border:1px solid #99d1ff;"></div>
<div style="left:1816px;top:426px;width:26px;height:25px;background:#cce8ff;border:1px solid #99d1ff;"></div>
<div style="left:1816px;top:568px;width:26px;height:25px;background:#cce8ff;border:1px solid #99d1ff;"></div>
<div style="left:1816px;top:594px;width:26px;height:25px;background:#cce8ff;border:1px solid #99d1ff;"></div>
<svg style="left:1784px;top:70px;pointer-events:none;" width="60" height="800" viewBox="1784 70 60 800"><defs>
<linearGradient id="rPaper" x1="0" y1="0" x2="1" y2="1"><stop offset="0" stop-color="#ffffff"/><stop offset="1" stop-color="#e4e4e0"/></linearGradient>
<linearGradient id="rBlue" x1="0" y1="0" x2="1" y2="1"><stop offset="0" stop-color="#e6eef7"/><stop offset="0.5" stop-color="#b5cde6"/><stop offset="1" stop-color="#e0eaf5"/></linearGradient>
<linearGradient id="rLens" x1="0" y1="0" x2="0" y2="1"><stop offset="0" stop-color="#f2f6fb"/><stop offset="1" stop-color="#b7cfe6"/></linearGradient>
<linearGradient id="rFolder" x1="0" y1="0" x2="0" y2="1"><stop offset="0" stop-color="#d2d5ab"/><stop offset="1" stop-color="#b6ba8a"/></linearGradient>
<linearGradient id="rPage" x1="0" y1="0" x2="1" y2="1"><stop offset="0.3" stop-color="#ffffff"/><stop offset="1" stop-color="#a8a8a8"/></linearGradient>
<linearGradient id="rGreen" x1="0" y1="0" x2="0" y2="1"><stop offset="0" stop-color="#8ae234"/><stop offset="1" stop-color="#4e9a06"/></linearGradient>
</defs><path d="M1793.8 83.6H1801.8L1805.3999999999999 87.19999999999999V97.39999999999999Q1805.3999999999999 98.39999999999999 1804.3999999999999 98.39999999999999H1793.8Q1792.8 98.39999999999999 1792.8 97.39999999999999V84.6Q1792.8 83.6 1793.8 83.6z" fill="url(#rPaper)" stroke="#888" stroke-width="1.1" stroke-linejoin="round"/><path d="M1801.8 83.6V86.6Q1801.8 87.19999999999999 1802.3999999999999 87.19999999999999H1805.3999999999999" fill="#fff" stroke="#888" stroke-width="0.8800000000000001" stroke-linejoin="round"/><path d="M1791.8 123V111.6Q1791.8 110.6 1792.8 110.6H1797Q1798 110.6 1798 111.6V112.6H1804.6Q1805.6 112.6 1805.6 113.6V123z" fill="url(#rFolder)" stroke="#77776a" stroke-width="1.1" stroke-linejoin="round"/><path d="M1793.6 112.4H1796.6V114H1803.8V118.4H1793.6z" fill="#c6caa0"/><path d="M1792.4 123.2L1793.8 118.8H1806.6L1805 123.2z" fill="#eeeede" stroke="#8a8462" stroke-width="1" stroke-linejoin="round"/><path d="M1794.6 121.8H1804" stroke="#c6caa0" stroke-width="1.6"/><path d="M1791.6 136Q1791.6 135.4 1792.2 135.4H1805.8Q1806.4 135.4 1806.4 136V149.6Q1806.4 150.2 1805.8 150.2H1793L1791.6 148.8z" fill="#4a78b4" stroke="#204a87" stroke-width="1"/><rect x="1793.2" y="135.6" width="11.6" height="7.6" fill="#fbfdfd"/><rect x="1793.2" y="135.4" width="11.6" height="2.6" fill="#ef0f0f"/><path d="M1795.2 140H1802.8M1795.2 141.8H1802.8" stroke="#d6d6d6" stroke-width="0.8"/><rect x="1794.8" y="144" width="8.6" height="6.4" fill="#f4f4f4" stroke="#444" stroke-width="1.1"/><rect x="1796.4" y="145.4" width="2" height="3.4" fill="#5f8fc6" stroke="#444" stroke-width="0.8"/><path d="M1800.4 149.4L1802.6 145.6V149.4z" fill="#cfcfcf"/><path d="M1794.8 169V162.6Q1794.8 161.6 1795.8 161.6H1802.4Q1803.4 161.6 1803.4 162.6V169z" fill="#fafafa" stroke="#555" stroke-width="1.1"/><path d="M1796.6 164.4H1801.6M1796.6 166.4H1801.6" stroke="#bbb" stroke-width="0.9"/><path d="M1793.6 168.4L1791.6 171.2V175.4Q1791.6 176.4 1792.6 176.4H1805.6Q1806.6 176.4 1806.6 175.4V171.2L1804.6 168.4z" fill="#ededeb" stroke="#555" stroke-width="1.1" stroke-linejoin="round"/><path d="M1794.2 169H1804" stroke="#555" stroke-width="1.2"/><path d="M1793.8 173.4H1804.6" stroke="#444" stroke-width="1.3"/><path d="M1793.6 172.2H1804.8V174.6H1793.6z" fill="none" stroke="#c9c9c9" stroke-width="0.6"/><path d="M1796.6 199.6H1802.8L1806.6 203.4V213.2Q1806.6 214.2 1805.6 214.2H1796.6Q1795.6 214.2 1795.6 213.2V200.6Q1795.6 199.6 1796.6 199.6z" fill="url(#rPaper)" stroke="#111" stroke-width="1.3" stroke-linejoin="round"/><path d="M1802.8 199.6V202.8Q1802.8 203.4 1803.3999999999999 203.4H1806.6" fill="#fff" stroke="#111" stroke-width="1.04" stroke-linejoin="round"/><path d="M1791 207.5H1798" stroke="#000" stroke-width="1.4"/><path d="M1797.6 204.8L1801 207.5L1797.6 210.2z" fill="#000"/><path d="M1792.6 225.8H1798.8L1802.6 229.60000000000002V239.4Q1802.6 240.4 1801.6 240.4H1792.6Q1791.6 240.4 1791.6 239.4V226.8Q1791.6 225.8 1792.6 225.8z" fill="url(#rPaper)" stroke="#111" stroke-width="1.3" stroke-linejoin="round"/><path d="M1798.8 225.8V229.00000000000003Q1798.8 229.60000000000002 1799.3999999999999 229.60000000000002H1802.6" fill="#fff" stroke="#111" stroke-width="1.04" stroke-linejoin="round"/><path d="M1797 233.4H1804" stroke="#000" stroke-width="1.4"/><path d="M1803.6 230.7L1807 233.4L1803.6 236.1z" fill="#000"/><path d="M1791.2 270.6L1798.4 263.4V267.4C1803 267.4 1806.8 269 1806.8 272.4C1806.8 275.4 1804 277.6 1801.4 278.8C1803 277 1803.2 274.2 1798.4 274.2V277.8z" fill="#a08030" opacity="0.5"/><path d="M1806.8 296.6L1799.4 289.4V293.2C1794 293.2 1791.2 295.4 1791.2 298.6C1791.2 301.4 1793.4 303.8 1796.4 304.8C1795 302.8 1795 300.2 1799.4 300.2V303.8z" fill="url(#rGreen)" stroke="#4e9a06" stroke-width="0.8" stroke-linejoin="round"/><path d="M1793 298.2C1793.4 295.8 1796 295 1800.4 295" stroke="#c8f08a" stroke-width="0.9" fill="none"/><rect x="1791.6" y="327.8" width="10.8" height="11.6" rx="0.8" fill="#fcfcfc" stroke="#d0d0d0" stroke-width="1"/><path d="M1796.6 330.8H1805.6Q1806.4 330.8 1806.4 331.6V339.4L1803.2 342.4H1796.6Q1795.8 342.4 1795.8 341.6V331.6Q1795.8 330.8 1796.6 330.8z" fill="#fdfdfd" stroke="#777" stroke-width="1.1"/><path d="M1798 333.4H1803.8M1798 335.4H1802.8M1798 337.4H1803.8" stroke="#cfcfcf" stroke-width="0.9"/><path d="M1802.6 342.2V338.8H1806.2" fill="none" stroke="#777" stroke-width="0.9"/><path d="M1793.4 353.4C1792 355.6 1793 357.6 1794.6 359L1798 362.4L1799.4 361z" fill="#eeeeec" stroke="#999" stroke-width="0.8"/><path d="M1803.6 353.4C1805 355.6 1804 357.6 1802.4 359L1799 362.4L1797.6 361z" fill="#eeeeec" stroke="#999" stroke-width="0.8"/><rect x="1791.8" y="362.6" width="5.6" height="5.8" rx="2.2" fill="#d98e2c" stroke="#8f5902" stroke-width="1.2"/><rect x="1799.6" y="362.6" width="5.6" height="5.8" rx="2.2" fill="#d98e2c" stroke="#8f5902" stroke-width="1.2"/><circle cx="1794.6" cy="365.5" r="1" fill="#f6d7a8" stroke="#8f5902" stroke-width="0.6"/><circle cx="1802.4" cy="365.5" r="1" fill="#f6d7a8" stroke="#8f5902" stroke-width="0.6"/><rect x="1792.6" y="380.2" width="12.8" height="14.2" rx="1.4" fill="#d58a28" stroke="#8f5902" stroke-width="1.1"/><path d="M1794.8 381.8H1803.4V389.8L1800.4 393.2H1794.8z" fill="#fafafa" stroke="#666" stroke-width="0.9"/><path d="M1796.8 384.4H1800.8M1796.8 386.4H1800.8" stroke="#c4c4c4" stroke-width="0.8"/><rect x="1796.2" y="379.2" width="5.6" height="2.6" rx="1" fill="#aaa" stroke="#666" stroke-width="0.8"/><path d="M1803.6 429.79999999999995L1805.2 431.29999999999995" stroke="#000" stroke-width="2.6" stroke-linecap="round"/><circle cx="1798.6" cy="424.4" r="6.9" fill="url(#rLens)" stroke="#000" stroke-width="1.25"/><rect x="1794.3" y="421.3" width="8.6" height="6.4" fill="#fff" stroke="#000" stroke-width="1.2" stroke-dasharray="1 1"/><path d="M1803.6 455.79999999999995L1805.2 457.29999999999995" stroke="#000" stroke-width="2.6" stroke-linecap="round"/><circle cx="1798.6" cy="450.4" r="6.9" fill="url(#rLens)" stroke="#000" stroke-width="1.25"/><rect x="1794.6" y="446.8" width="4.8" height="4.6" fill="#fff0a0" stroke="#111" stroke-width="1"/><rect x="1797.8" y="449.8" width="4.8" height="4.6" fill="#ffe35a" stroke="#111" stroke-width="1"/><rect x="1798.8" y="450.8" width="1.6" height="1.6" fill="#fffbe0"/><path d="M1803.6 481.79999999999995L1805.2 483.29999999999995" stroke="#000" stroke-width="2.6" stroke-linecap="round"/><circle cx="1798.6" cy="476.4" r="6.9" fill="url(#rLens)" stroke="#000" stroke-width="1.25"/><rect x="1795.6" y="472.6" width="6" height="7.8" fill="url(#rPage)" stroke="#000" stroke-width="1.2"/><rect x="1791.8" y="507.5" width="9" height="8" fill="#fff" stroke="#000" stroke-width="1.2"/><rect x="1793" y="508.7" width="6.6" height="5.6" fill="url(#rBlue)"/><rect x="1794.9" y="510.5" width="11.6" height="11.6" fill="#fff" stroke="#000" stroke-width="1.3"/><rect x="1796.2" y="511.8" width="9" height="9" fill="url(#rBlue)"/><rect x="1791.8" y="533.5" width="9" height="8" fill="#fff" stroke="#000" stroke-width="1.2"/><rect x="1793" y="534.7" width="6.6" height="5.6" fill="url(#rBlue)"/><rect x="1794.9" y="536.5" width="11.6" height="11.6" fill="#fff" stroke="#000" stroke-width="1.3"/><rect x="1796.2" y="537.8" width="9" height="9" fill="url(#rBlue)"/><path d="M1798.6 542V540.6C1798.6 538.4 1802.2 538.4 1802.2 540.6V542" fill="none" stroke="#000" stroke-width="1.1"/><rect x="1797.4" y="541.8" width="6" height="3.8" fill="#ffc31e" stroke="#000" stroke-width="1.1"/><rect x="1791.8" y="559.5" width="9" height="8" fill="#fff" stroke="#000" stroke-width="1.2"/><rect x="1793" y="560.7" width="6.6" height="5.6" fill="url(#rBlue)"/><rect x="1794.9" y="562.5" width="11.6" height="11.6" fill="#fff" stroke="#000" stroke-width="1.3"/><rect x="1796.2" y="563.8" width="9" height="9" fill="url(#rBlue)"/><path d="M1802.2 567.8V566.2C1802.2 564.2 1799.4 564.2 1799.2 564.6" fill="none" stroke="#000" stroke-width="1.1"/><rect x="1797.4" y="567.8" width="6" height="3.8" fill="#6cc030" stroke="#000" stroke-width="1.1"/><rect x="1793.6" y="603.6" width="9" height="7" fill="url(#rBlue)" stroke="#222" stroke-width="1.2"/><circle cx="1801.7" cy="602.3" r="3.9" fill="url(#rBlue)" stroke="#333" stroke-width="1.1"/><rect x="1791" y="597" width="2" height="2" fill="#000" shape-rendering="crispEdges"/><rect x="1805" y="597" width="2" height="2" fill="#000" shape-rendering="crispEdges"/><rect x="1791" y="611" width="2" height="2" fill="#000" shape-rendering="crispEdges"/><rect x="1805" y="611" width="2" height="2" fill="#000" shape-rendering="crispEdges"/><rect x="1793.6" y="629.6" width="9" height="7" fill="#ffd21e" stroke="#222" stroke-width="1.2"/><path d="M1795 635.4L1795.6 631.4L1801.4 634.6V635.4z" fill="#fff8c8"/><circle cx="1801.7" cy="628.3" r="3.9" fill="url(#rBlue)" stroke="#333" stroke-width="1.1"/><rect x="1796" y="623" width="2" height="2" fill="#000" shape-rendering="crispEdges"/><rect x="1805" y="623" width="2" height="2" fill="#000" shape-rendering="crispEdges"/><rect x="1791" y="627" width="2" height="2" fill="#000" shape-rendering="crispEdges"/><rect x="1796" y="632" width="2" height="2" fill="#000" shape-rendering="crispEdges"/><rect x="1805" y="632" width="2" height="2" fill="#000" shape-rendering="crispEdges"/><rect x="1791" y="637" width="2" height="2" fill="#000" shape-rendering="crispEdges"/><rect x="1803" y="637" width="2" height="2" fill="#000" shape-rendering="crispEdges"/><path d="M1791 661H1807L1805.6 662.2L1793 663L1792.4 676.6L1791 677z" fill="#000"/><path d="M1791 676.8C1793 675.8 1793.6 673.4 1795.4 672.4C1797 671.6 1798 671.8 1799 671L1804 665.4L1806.6 668.4L1800.6 672.6C1799.4 673.6 1799.4 675 1797.8 676C1796 677 1793 677 1791 676.8z" fill="#000"/><path d="M1796.2 673.6L1801.6 668.4" stroke="#ddd" stroke-width="0.8"/><path d="M1804 665.4L1807 662.4V669.2z" fill="#fdb10a" stroke="#222" stroke-width="0.5"/><text x="1790.6" y="703" style="font-family:'Liberation Serif',serif" font-size="24.5" font-weight="700" fill="#000" textLength="16.6" lengthAdjust="spacingAndGlyphs">T</text><path d="M1791.4 721.4H1802.4L1806.6 726.6H1795.6z" fill="#fff" stroke="#222" stroke-width="1" stroke-linejoin="round"/><path d="M1791.4 718.4H1802.4L1806.6 723.6H1795.6z" fill="#fff" stroke="#222" stroke-width="1" stroke-linejoin="round"/><path d="M1791.4 715.4H1802.4L1806.6 720.6H1795.6z" fill="#fff" stroke="#222" stroke-width="1" stroke-linejoin="round"/><rect x="1791.7" y="739.7" width="14.8" height="14.6" rx="0.6" fill="#ececea" stroke="#000" stroke-width="1.3"/><rect x="1792.4" y="740.4" width="13.4" height="2" fill="#a8c8e8"/><path d="M1791.4 742.8H1806.8" stroke="#000" stroke-width="1"/><path d="M1797.6 745.2L1794.4 748L1797.6 750.8M1800.6 745.2L1803.8 748L1800.6 750.8" stroke="#333" stroke-width="1.1" fill="none"/><path d="M1791.4 765V781" stroke="#dd0000" stroke-width="1.1"/><rect x="1793.8" y="765.8" width="5.2" height="3.6" fill="#b9d2ec" stroke="#222" stroke-width="1.1"/><rect x="1793.8" y="771.6" width="12.6" height="2.8" fill="#b9d2ec" stroke="#222" stroke-width="1.1"/><rect x="1793.8" y="776.8" width="9.6" height="3.6" fill="#b9d2ec" stroke="#222" stroke-width="1.1"/><path d="M1793.8 803.6H1801.8L1805.3999999999999 807.2V817.4Q1805.3999999999999 818.4 1804.3999999999999 818.4H1793.8Q1792.8 818.4 1792.8 817.4V804.6Q1792.8 803.6 1793.8 803.6z" fill="url(#rPaper)" stroke="#777" stroke-width="1.1" stroke-linejoin="round"/><path d="M1801.8 803.6V806.6Q1801.8 807.2 1802.3999999999999 807.2H1805.3999999999999" fill="#fff" stroke="#777" stroke-width="0.8800000000000001" stroke-linejoin="round"/><path d="M1793 807.4H1795.4C1795.4 811.4 1799.4 811.4 1799.4 807.4H1801.6C1802 810.6 1800.4 813 1798.6 814V817H1796V814C1794.2 813 1792.8 810.6 1793 807.4z" fill="#e8e8e8" stroke="#666" stroke-width="1"/><rect x="1795.6" y="816" width="3.4" height="3" fill="#1a3f9a"/><rect x="1796.6" y="817" width="1.4" height="1" fill="#dce6ff"/><path d="M1803.4 830L1805.8 832.6L1803.4 835L1796.4 841.4" stroke="#777" stroke-width="2.6" fill="none" stroke-linejoin="round"/><path d="M1803.4 830.6L1805.2 832.6L1803.2 834.6L1797 840.6" stroke="#f0f0f0" stroke-width="1.1" fill="none"/><path d="M1794.4 829.4L1796.4 831.4C1796.8 833 1796 834 1794.4 834L1792.2 832.4C1791.8 834.8 1793.4 836.6 1796 836.2L1800.6 840.8C1800.2 843.4 1802 844.8 1804.2 844.2L1802.2 842.4C1802 840.8 1803 840 1804.6 840.2L1806.4 842C1806.8 839.6 1805.2 838 1802.6 838.4L1798 833.8C1798.4 831.2 1796.8 829.2 1794.4 829.4z" fill="#ededed" stroke="#777" stroke-width="0.9" stroke-linejoin="round"/><path d="M1797.6 838.6L1794.6 843.2C1793.6 844.6 1792.2 844.4 1791.6 843C1791 841.6 1791.8 840.6 1793 840L1796.6 837.6z" fill="#8db4e0" stroke="#2a50b0" stroke-width="1"/></svg>
<svg style="left:1812px;top:70px;pointer-events:none;" width="32" height="560" viewBox="1812 70 32 560"><path d="M1826.2 88.2L1831.2 93.2" stroke="#000" stroke-width="1.3"/><path d="M1832.2 94.2L1828 93.4L1831.4 90z" fill="#000"/><path d="M1824 83.3L1826.7 86L1824 88.7L1821.3 86z" fill="#b4b4ff" stroke="#3c3cff" stroke-width="1.4" stroke-linejoin="round" opacity="1"/><path d="M1834 93.3L1836.7 96L1834 98.7L1831.3 96z" fill="#b4b4ff" stroke="#2f8a2f" stroke-width="1.4" stroke-linejoin="round" opacity="1"/><path d="M1826.2 126.2L1831.2 131.2" stroke="#000" stroke-width="1.3"/><path d="M1832.2 132.2L1828 131.4L1831.4 128z" fill="#000"/><path d="M1824 121.3L1826.7 124L1824 126.7L1821.3 124z" fill="#b4b4ff" stroke="#3c3cff" stroke-width="1.4" stroke-linejoin="round" opacity="1"/><path d="M1834 131.3L1836.7 134L1834 136.7L1831.3 134z" fill="#b4b4ff" stroke="#2f8a2f" stroke-width="1.4" stroke-linejoin="round" opacity="1"/><path d="M1826.2 268.2L1831.2 273.2" stroke="#000" stroke-width="1.3"/><path d="M1832.2 274.2L1828 273.4L1831.4 270z" fill="#000"/><path d="M1824 263.3L1826.7 266L1824 268.7L1821.3 266z" fill="#b4b4ff" stroke="#3c3cff" stroke-width="1.4" stroke-linejoin="round" opacity="1"/><path d="M1834 273.3L1836.7 276L1834 278.7L1831.3 276z" fill="#b4b4ff" stroke="#2f8a2f" stroke-width="1.4" stroke-linejoin="round" opacity="1"/><path d="M1826.2 436.2L1831.2 441.2" stroke="#000" stroke-width="1.3"/><path d="M1832.2 442.2L1828 441.4L1831.4 438z" fill="#000"/><path d="M1824 431.3L1826.7 434L1824 436.7L1821.3 434z" fill="#b4b4ff" stroke="#3c3cff" stroke-width="1.4" stroke-linejoin="round" opacity="1"/><path d="M1834 441.3L1836.7 444L1834 446.7L1831.3 444z" fill="#b4b4ff" stroke="#2f8a2f" stroke-width="1.4" stroke-linejoin="round" opacity="1"/><path d="M1834 147V160M1821 160H1834" stroke="#5a9a4a" stroke-width="1.6" stroke-dasharray="1.6 1.4" fill="none" opacity="0.9"/><path d="M1834 173V185M1821 186H1832" stroke="#444" stroke-width="1.6" stroke-dasharray="1.6 1.4" fill="none" opacity="0.85"/><path d="M1834 183.4L1836.6 186L1834 188.6L1831.4 186z" fill="#9a9ad8" stroke="#2f8a2f" stroke-width="1.1" stroke-linejoin="round" opacity="1"/><path d="M1822 211.4H1834" stroke="#000" stroke-width="1" stroke-dasharray="1 1.2 3 1.2" fill="none"/><path d="M1834 199V211" stroke="#777" stroke-width="1" stroke-dasharray="1 1.4" fill="none"/><path d="M1834 201L1836 203L1834 205L1832 203z" fill="#aabbdd" stroke="#3a8a3a" stroke-width="0.9" stroke-linejoin="round" opacity="0.85"/><path d="M1821 237.5H1833.5" stroke="#000" stroke-width="1" stroke-dasharray="1 1.2 3 1.2" fill="none"/><path d="M1833.5 225.5V237" stroke="#111" stroke-width="1" stroke-dasharray="1 1.6" fill="none"/><path d="M1824.6 227.4L1826.6 229.4L1824.6 231.4L1822.6 229.4z" fill="#c8d4e8" stroke="#3a8a3a" stroke-width="0.9" stroke-linejoin="round" opacity="0.85"/><path d="M1821.8 290.8C1828 291.6 1831.6 294.6 1831.4 298C1831.2 300.4 1830.2 302 1829.4 303.2C1833 303 1835.4 301 1836.2 298.2" stroke="#0a7a0a" stroke-width="1.3" fill="none" stroke-linecap="round"/><path d="M1822 330L1836 316M1822 325L1836 321.2" stroke="#444" stroke-width="1" fill="none"/><rect x="1827" y="321" width="4" height="4" rx="1.4" fill="#9a8ae8" stroke="#0a8a0a" stroke-width="1.5" transform="rotate(10 1829 323)"/><path d="M1822 341.6C1828 342.6 1831.8 346 1831.6 349.4C1831.5 351 1830.6 352.4 1829.6 353.4M1831 353.4C1833.6 352.6 1835.6 351 1836.2 348.8" stroke="#777" stroke-width="1.1" fill="none" stroke-linecap="round"/><path d="M1829 351.3L1831.7 354L1829 356.7L1826.3 354z" fill="#b0a0f0" stroke="#2f9a2f" stroke-width="1.4" stroke-linejoin="round" opacity="1"/><path d="M1821.8 367.4C1825 368 1828 369 1830 371.6C1832 374.4 1831.2 377.6 1829.4 380C1833 379.6 1835.6 377.8 1836.4 375" stroke="#444" stroke-width="1" fill="none" stroke-linecap="round"/><rect x="1826.2" y="368.2" width="4.6" height="4.4" rx="1" fill="#a8a0f0" stroke="#1f9a1f" stroke-width="1.4"/><path d="M1822 408L1836 394" stroke="#444" stroke-width="1" fill="none"/><path d="M1823 405.4L1824.6 401.2M1824.8 407.4L1826.6 403M1831.6 397L1833.2 392.8M1833.4 399L1835 394.8" stroke="#dd0000" stroke-width="1.1"/><rect x="1827.2" y="399.2" width="3.6" height="3.6" rx="1.4" fill="#9a8ae8" stroke="#0a8a0a" stroke-width="1.4"/><path d="M1833.4 457.2V469.6H1821" stroke="#777" stroke-width="1" fill="none"/><path d="M1826.1 460.70000000000005L1828.0 462.6L1826.1 464.5L1824.1999999999998 462.6z" fill="#c0c0f0" stroke="#2f8a2f" stroke-width="1" stroke-linejoin="round" opacity="1"/><path d="M1825.8 485.2V491.6M1822.4 488.4H1829.2" stroke="#333" stroke-width="1"/><path d="M1833.5 484V496" stroke="#111" stroke-width="1" stroke-dasharray="1 1.6"/><path d="M1821 495.8H1834" stroke="#777" stroke-width="1.2" stroke-dasharray="1.8 1.2"/><path d="M1826 522H1837" stroke="#6ab86a" stroke-width="1.4"/><text x="1824.6" y="521.8" font-size="17.4" font-weight="700" fill="#000" stroke="#000" stroke-width="0.5" textLength="12.6" lengthAdjust="spacingAndGlyphs">A</text><path d="M1823.9 519.7L1826.2 522L1823.9 524.3L1821.6000000000001 522z" fill="#c8c0f8" stroke="#2f8a2f" stroke-width="1.1" stroke-linejoin="round" opacity="1"/><rect x="1823.7" y="547.7" width="9.8" height="13.6" fill="url(#rPage)" stroke="#000" stroke-width="1.1"/><path d="M1822.4 573V589M1826.5 573V589M1830.5 573V589M1834.5 573V589M1821 575.4H1837M1821 579.5H1837M1821 583.6H1837M1821 587.6H1837" stroke="#0000ff" stroke-width="1.1" fill="none"/><path d="M1821.5 599V614.8M1833.4 599V614.8M1826.4 614.8L1831.6 599" stroke="#0000ff" stroke-width="1.2" fill="none" stroke-linecap="round"/></svg>
<svg style="left:0px;top:0px;pointer-events:none;" width="1844" height="1080" viewBox="0 0 1844 1080"><path d="M40 81.6V80.8C40 78.6 44 78.6 44 80.8V81.6" stroke="#6a6a6a" stroke-width="1.1" fill="none"/><rect x="38.6" y="81.6" width="7" height="5" rx="0.6" fill="#f2b632" stroke="#8a5a08" stroke-width="0.8"/><rect x="41.6" y="83.2" width="1" height="1.8" fill="#5a3a04"/><circle cx="1767.6" cy="82.6" r="3.2" fill="#f4f4f4" stroke="#8c8c8c" stroke-width="1"/><path d="M1770 85L1772.8 87.6" stroke="#777" stroke-width="1.4" stroke-linecap="round"/><path d="M1766.6 81.4V83.8" stroke="#aaa" stroke-width="0.7"/><circle cx="1765.6" cy="1005" r="0.75" fill="#1a9a1a"/><circle cx="1767.4" cy="1006.4" r="0.75" fill="#1a9a1a"/><circle cx="1769.2" cy="1007.8" r="0.75" fill="#88aa00"/><circle cx="1765.8" cy="1007.6" r="0.75" fill="#1a88aa"/><circle cx="1766.2" cy="1010.2" r="0.75" fill="#2222cc"/><circle cx="1770.6" cy="1008.8" r="0.75" fill="#cc8800"/><circle cx="1768.6" cy="1010.4" r="0.75" fill="#aa22aa"/><circle cx="1771.8" cy="1009.6" r="0.75" fill="#cc2222"/><circle cx="1766.6" cy="1011.8" r="0.75" fill="#5a1a9a"/><path d="M1765 1004L1772.4 1009.6L1766 1012.4z" fill="#ccc" opacity="0.5"/></svg>
<svg style="left:0px;top:0px;pointer-events:none;" width="1844" height="23" viewBox="0 0 1844 23"><defs><linearGradient id="tLogo" x1="0" y1="0" x2="0" y2="1"><stop offset="0" stop-color="#ffffff"/><stop offset="1" stop-color="#777"/></linearGradient></defs><path d="M9.6 2.6L2 10.2C1.6 10.8 2 11.4 3 11.6L5 12.4C6.4 12.8 4.6 13.6 5.4 14.2L8.4 16.6C9 18.2 10.2 18.2 10.8 16.6L13 14.8C14 14 12.6 13 14.2 12.6L16.4 11.6C17.4 11.2 17.6 10.6 17.2 10.2z" fill="#000"/><path d="M9.6 4L4.6 9.2L6.6 10L7.8 8.8L9 10L10.4 8.6L12 10.4L14.6 9.2z" fill="url(#tLogo)"/><path d="M11.4 5.4L15.8 9.8" stroke="#3a4ad0" stroke-width="0.9"/><ellipse cx="4.9" cy="16.4" rx="1" ry="0.6" fill="#000"/><ellipse cx="16" cy="14.2" rx="0.9" ry="0.5" fill="#000"/><circle cx="15.5" cy="16.4" r="0.4" fill="#112"/><path d="M1723 10.5H1733" stroke="#fff" stroke-width="1" shape-rendering="crispEdges"/><path d="M1768.5 7.5H1775.5V14.5H1768.5z" stroke="#fff" stroke-width="1" fill="none"/><path d="M1770.5 7.5V5.5H1777.5V12.5H1775.5" stroke="#fff" stroke-width="1" fill="none"/><path d="M1814.2 5.2L1824 15M1824 5.2L1814.2 15" stroke="#fff" stroke-width="1.1" fill="none"/></svg>
<svg style="left:0px;top:44px;pointer-events:none;" width="1100" height="32" viewBox="0 44 1100 32"><path d="M96.6 52.6H104.8L108.39999999999999 56.2V66.4Q108.39999999999999 67.4 107.39999999999999 67.4H96.6Q95.6 67.4 95.6 66.4V53.6Q95.6 52.6 96.6 52.6z" fill="url(#rPaper)" stroke="#8a8a8a" stroke-width="1.1" stroke-linejoin="round"/><path d="M104.8 52.6V55.6Q104.8 56.2 105.39999999999999 56.2H108.39999999999999" fill="#fff" stroke="#8a8a8a" stroke-width="0.8800000000000001" stroke-linejoin="round"/><path d="M95.8 56.6H98.2C98.2 60.6 102.2 60.6 102.2 56.6H104.4C104.8 59.8 103.2 62.2 101.4 63.2V66H98.8V63.2C97 62.2 95.6 59.8 95.8 56.6z" fill="#ececec" stroke="#777" stroke-width="1"/><rect x="98.4" y="65" width="3.4" height="3" fill="#1a3f9a"/><rect x="99.4" y="66" width="1.4" height="1" fill="#dce6ff"/><path d="M239.5 55V60" stroke="#111" stroke-width="1.1"/><path d="M236.8 59L242.2 59L239.5 62z" fill="#000"/><path d="M234.8 64.2C239 64 241.6 63 244.2 60.6V64.2z" fill="#000"/><defs><linearGradient id="kTr" x1="0" y1="0" x2="1" y2="0"><stop offset="0.1" stop-color="#ffffff"/><stop offset="1" stop-color="#606060"/></linearGradient></defs><rect x="262" y="55" width="8.2" height="9" fill="url(#kTr)"/><path d="M261 64.2C265 64 267.6 63 270.2 60.6V64.2z" fill="#000"/><path d="M483 63.4H492M483.6 63L487.2 56.2M485.2 59.6C487 60.2 487.8 61.4 487.6 63M491.6 62.2V63.4" stroke="#111" stroke-width="1" fill="none"/></svg>
<svg style="left:195px;top:1055px;pointer-events:none;" width="35" height="20" viewBox="195 1055 35 20"><path d="M198 1066.4C200 1063.4 205 1063.4 207 1066.4C205 1069.6 200 1069.6 198 1066.4z" fill="#fff" stroke="#111" stroke-width="0.9"/><circle cx="202.7" cy="1066.6" r="1.9" fill="#000"/><path d="M199.2 1064.4L198.2 1062.8M200.8 1063.6L200.2 1061.6M202.6 1063.2V1061.2M204.4 1063.6L205.2 1061.8M206 1064.6L207 1063" stroke="#111" stroke-width="0.9"/><path d="M198.6 1067.6C200.4 1069.6 204.8 1069.8 206.6 1067.6" stroke="#111" stroke-width="1.3" fill="none"/><path d="M219.6 1065.2V1063.4C219.6 1060.6 224 1060.6 224 1063.4V1065.2" stroke="#555" stroke-width="1" fill="none"/><rect x="219.2" y="1065.2" width="5.8" height="4.6" fill="#ecd45a" stroke="#6a5a1a" stroke-width="0.8"/><rect x="219.6" y="1065.6" width="1.8" height="3.8" fill="#fff"/><rect x="221.8" y="1066.4" width="1" height="1.4" fill="#5a3a04"/></svg>
</body></html>
